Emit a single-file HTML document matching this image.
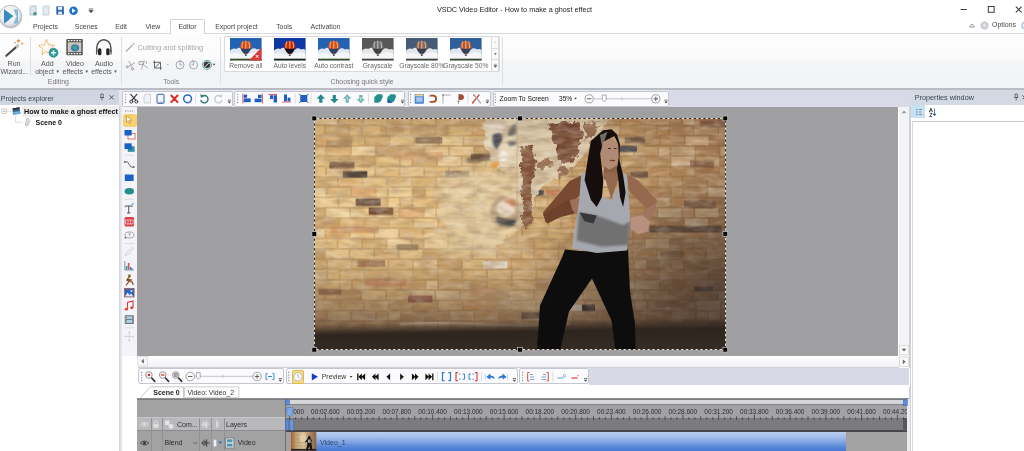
<!DOCTYPE html><html><head><meta charset="utf-8"><title>VSDC Video Editor</title><style>
html,body{margin:0;padding:0;background:#fff;}
body{width:1024px;height:451px;overflow:hidden;position:relative;filter:blur(0.35px);will-change:transform;font-family:"Liberation Sans",sans-serif;}
div{position:absolute;box-sizing:border-box;}
svg{position:absolute;overflow:visible;}
.t{white-space:nowrap;}
</style></head><body><div class="t" style="left:437px;top:6.47px;font-size:7.22px;line-height:8.66px;color:#222;font-weight:normal;">VSDC Video Editor - How to make a ghost effect</div><svg style="left:955px;top:3.400px" width="69" height="14" viewBox="0 0 69 14"><path d="M5.600 6.500h6.200" stroke="#3a3a3a" stroke-width="1" fill="none"/><rect x="33.300" y="3.500" width="5.800" height="5.800" stroke="#3a3a3a" stroke-width="1" fill="none"/><path d="M60.800 3.600l5.800 5.800M66.600 3.600l-5.800 5.800" stroke="#3a3a3a" stroke-width="1.100" fill="none"/></svg><svg style="left:966px;top:19px" width="58" height="13" viewBox="0 0 58 13"><path d="M3.5 8l2.5-3 2.5 3z" stroke="#777" stroke-width="0.7" fill="none"/><circle cx="18.5" cy="6.5" r="3.600" fill="#cfd3da" stroke="#b4b8c0" stroke-width="1.200" stroke-dasharray="1.300 0.900"/><circle cx="18.5" cy="6.5" r="1.3" fill="#e8e8ea"/><circle cx="59.300" cy="6.500" r="3.500" fill="#e8f0fa" stroke="#8ab0e0" stroke-width="1"/></svg><div class="t" style="left:992px;top:21.43px;font-size:6.95px;line-height:8.34px;color:#444;font-weight:normal;">Options</div><svg style="left:0;top:3px" width="24" height="27" viewBox="0 0 24 27">
<defs><radialGradient id="orb" cx="0.45" cy="0.4" r="0.6"><stop offset="0" stop-color="#fff"/><stop offset="0.7" stop-color="#e9ecef"/><stop offset="1" stop-color="#b9bec4"/></radialGradient></defs>
<circle cx="10.5" cy="13.5" r="11.3" fill="url(#orb)" stroke="#aeb3b9" stroke-width="0.8"/>
<path d="M4 6.5l9.5 6.5L4 20.5z" fill="#2aa09a"/><path d="M4 6.5l5 3.4v7.2l-5 3.4z" fill="#3b86c8"/>
<path d="M13.5 6.5h4.5v14h-4.5l3-7z" fill="#6fb3d8" opacity="0.85"/>
</svg><svg style="left:28px;top:5px" width="70" height="13" viewBox="0 0 70 13">
<path d="M2 2.5q0-1.5 1.5-1.5h4.5v9h-6z" fill="#dfe7ee" stroke="#9fb0bd" stroke-width="0.7"/><circle cx="7" cy="8.8" r="1.8" fill="#3b9a8a"/>
<path d="M15 2.5q0-1.5 1.500-1.5h4.500v9h-6z" fill="#e4ebf1" stroke="#b5c2cc" stroke-width="0.7"/>
<rect x="28.300" y="1.300" width="7.600" height="8.400" rx="0.800" fill="#2c69b0"/><rect x="30" y="1.800" width="4.200" height="3" fill="#e9f0f8"/><rect x="30.200" y="6.600" width="3.800" height="3" fill="#dfe8f2"/>
<circle cx="45.500" cy="5.700" r="4.300" fill="#1f73c4"/><path d="M44 3.300l3.700 2.400-3.700 2.400z" fill="#fff"/>
<path d="M60.800 3.800h4.400M60.800 5.200h4.400l-2.200 2.600z" fill="#444" stroke="#444" stroke-width="0.600"/>
</svg><div style="left:0px;top:32.6px;width:1024px;height:1px;background:#d5d8dc;"></div><div style="left:170px;top:19px;width:35px;height:15px;background:#fff;border:1px solid #cfd3d8;border-bottom:none;border-radius:2px 2px 0 0;"></div><div class="t" style="left:5.4px;width:80px;text-align:center;top:22.600px;font-size:6.900px;line-height:8.300px;color:#444;">Projects</div><div class="t" style="left:46.3px;width:80px;text-align:center;top:22.600px;font-size:6.900px;line-height:8.300px;color:#444;">Scenes</div><div class="t" style="left:81.1px;width:80px;text-align:center;top:22.600px;font-size:6.900px;line-height:8.300px;color:#444;">Edit</div><div class="t" style="left:112.8px;width:80px;text-align:center;top:22.600px;font-size:6.900px;line-height:8.300px;color:#444;">View</div><div class="t" style="left:147.5px;width:80px;text-align:center;top:22.600px;font-size:6.900px;line-height:8.300px;color:#444;">Editor</div><div class="t" style="left:196.5px;width:80px;text-align:center;top:22.600px;font-size:6.900px;line-height:8.300px;color:#444;">Export project</div><div class="t" style="left:244.2px;width:80px;text-align:center;top:22.600px;font-size:6.900px;line-height:8.300px;color:#444;">Tools</div><div class="t" style="left:285.5px;width:80px;text-align:center;top:22.600px;font-size:6.900px;line-height:8.300px;color:#444;">Activation</div><div style="left:0px;top:34px;width:1024px;height:54px;background:linear-gradient(#fdfdfe 0%,#fbfbfc 45%,#f4f5f7 52%,#f2f3f6 100%);"></div><div style="left:0px;top:87.5px;width:1024px;height:2.2px;background:#b9bcc2;"></div><div style="left:30.4px;top:37px;width:1px;height:38px;background:#dddfe3;"></div><div style="left:120.6px;top:37px;width:1px;height:48px;background:#dddfe3;"></div><div style="left:220.3px;top:37px;width:1px;height:48px;background:#dddfe3;"></div><div style="left:502.3px;top:37px;width:1px;height:48px;background:#dddfe3;"></div><div class="t" style="left:47.8px;top:78.26px;font-size:6.9px;line-height:8.28px;color:#777;font-weight:normal;">Editing</div><div class="t" style="left:163.2px;top:78.26px;font-size:6.9px;line-height:8.28px;color:#777;font-weight:normal;">Tools</div><div class="t" style="left:330.5px;top:78.26px;font-size:6.9px;line-height:8.28px;color:#777;font-weight:normal;">Choosing quick style</div><div class="t" style="left:-26px;width:80px;text-align:center;top:59.80px;font-size:7.0px;line-height:8.40px;color:#555;">Run</div><div class="t" style="left:-25.8px;width:80px;text-align:center;top:68.10px;font-size:7.0px;line-height:8.40px;color:#555;">Wizard...</div><div class="t" style="left:7.299999999999997px;width:80px;text-align:center;top:59.74px;font-size:7.1px;line-height:8.52px;color:#555;">Add</div><div class="t" style="left:35.2px;top:68.10px;font-size:7.0px;line-height:8.40px;color:#555;">object<span style="font-size:4.500px;position:relative;top:-0.800px;margin-left:1.500px;color:#555">&#9660;</span></div><div class="t" style="left:35px;width:80px;text-align:center;top:59.74px;font-size:7.1px;line-height:8.52px;color:#555;">Video</div><div class="t" style="left:62.5px;top:68.10px;font-size:7.0px;line-height:8.40px;color:#555;">effects<span style="font-size:4.500px;position:relative;top:-0.800px;margin-left:1.500px;color:#555">&#9660;</span></div><div class="t" style="left:64px;width:80px;text-align:center;top:59.74px;font-size:7.1px;line-height:8.52px;color:#555;">Audio</div><div class="t" style="left:91.2px;top:68.10px;font-size:7.0px;line-height:8.40px;color:#555;">effects<span style="font-size:4.500px;position:relative;top:-0.800px;margin-left:1.500px;color:#555">&#9660;</span></div><svg style="left:0;top:34px" width="224" height="44" viewBox="0 34 224 44"><path d="M6.300 55.800L17.800 45.600" stroke="#4a4a4a" stroke-width="2.200" stroke-linecap="round"/><path d="M16 47.200l2.300-2" stroke="#c9c9c9" stroke-width="2.200"/><path d="M18.500 38.500l.6 1.500 1.500.2-1.100 1 .3 1.500-1.300-.8-1.300.8.300-1.500-1.100-1 1.500-.2zM22.300 42l.4 1 1 .1-.8.700.2 1-.9-.5-.9.500.2-1-.8-.7 1-.1zM15 41.500l.3.800.8.100-.6.500.2.800-.7-.4-.7.400.2-.8-.6-.5.800-.1z" fill="#e89040"/><path d="M46.500 39.800l2.300 5 5.400.6-4 3.700 1.100 5.400-4.800-2.700-4.800 2.700 1.100-5.400-4-3.700 5.400-.6z" fill="#fff8ee" stroke="#e8a050" stroke-width="1.100" stroke-dasharray="1.200 0.900" stroke-linejoin="round"/><circle cx="53.500" cy="52.800" r="4.500" fill="#2a9a94" stroke="#1f7f86" stroke-width="0.600"/><path d="M53.500 50.200v5.200M50.900 52.800h5.200" stroke="#dff3f3" stroke-width="1.500"/><rect x="66.300" y="39" width="16.500" height="16.300" rx="1" fill="#555"/><rect x="67.800" y="42.300" width="13.500" height="9.800" fill="#cfc7b5"/><ellipse cx="75" cy="47.800" rx="4.200" ry="3.600" fill="#3a7fc0"/><path d="M72.500 47q1.500-2 3.500-1l1 2.500-2 1.500z" fill="#4aa860"/><path d="M68 40.700h1.600M70.800 40.700h1.600M73.600 40.700h1.600M76.400 40.700h1.600M79.200 40.700h1.600M68 53.700h1.600M70.800 53.700h1.600M73.600 53.700h1.600M76.400 53.700h1.600M79.200 53.700h1.600" stroke="#fff" stroke-width="1.300"/><path d="M96.800 52v-4.500a7 7.800 0 0 1 14 0v4.500" fill="none" stroke="#4a4a4a" stroke-width="1.400"/><rect x="98" y="48.200" width="3.400" height="7" rx="1.500" fill="#222"/><rect x="106.200" y="48.200" width="3.400" height="7" rx="1.500" fill="#222"/><path d="M96.600 50v4M111 50v4" stroke="#555" stroke-width="1.300" stroke-linecap="round"/><path d="M126.300 51.300l6-6" stroke="#b9a9a0" stroke-width="1.300" stroke-linecap="round"/><path d="M131.500 46l2.800-2.800M133 43l1.500 1.500" stroke="#c5c5c5" stroke-width="1" stroke-linecap="round"/><g stroke="#a4a4a8" fill="none" stroke-width="0.900" stroke-linecap="round"><path d="M127 67.500l7.500-4.500M129 61.500l3.800 7" /><circle cx="127.200" cy="66.800" r="1.100"/><circle cx="132.500" cy="69" r="1.100"/><path d="M139.500 61.500h4v3h-4zM144.500 61l-3 8M142 63.500l5.500 4.500" /><path d="M146.500 61.500v2" /></g><g stroke="#6a6a6e" fill="none" stroke-width="1"><path d="M154.500 60.500v7.500h7.500M153 62.300h7.500v7.500M154.800 67.800l5.500-5.400"/></g><path d="M166.700 64l1.100 1.300 1.100-1.300z" fill="#aaa"/><g stroke="#9aa0aa" fill="none" stroke-width="0.900"><circle cx="180" cy="65" r="4"/><path d="M180 62.300v2.700h2.200"/><path d="M180 61l1.300-1M180 61l1.300 1"/><circle cx="193.600" cy="65" r="4"/><path d="M193.600 62.300v2.700h-2.200"/><path d="M193.600 61l-1.300-1M193.600 61l-1.300 1"/></g><circle cx="207" cy="64.800" r="4.500" fill="#e8f4f3" stroke="#3a9a94" stroke-width="0.800"/><circle cx="207" cy="64.800" r="3.300" fill="#3a3a3a"/><path d="M205.200 66.600l3-3M208.500 63l.8.800" stroke="#e8e8e8" stroke-width="1" stroke-linecap="round"/><path d="M212.600 63.800l1.400 1.600 1.400-1.600z" fill="#444"/></svg><div class="t" style="left:137.4px;top:43.10px;font-size:7.5px;line-height:9.00px;color:#a8a8ac;">Cutting and splitting</div><div style="left:223.500px;top:36px;width:276px;height:36px;background:#fff;border:1px solid #d9dade;border-radius:1px;"></div><div style="left:491.300px;top:36px;width:8.200px;height:36px;border:1px solid #d9dade;background:#fafafb;"></div><div style="left:491.300px;top:48px;width:8.200px;height:12px;border-top:1px solid #d9dade;border-bottom:1px solid #d9dade;"></div><svg style="left:491px;top:36px" width="9" height="36" viewBox="0 0 9 36"><path d="M3.200 7l1.200-1.500 1.200 1.500z" fill="#c8c8c8"/><path d="M3 17.300l1.400 1.800 1.400-1.800z" fill="#555"/><path d="M3 28.300h2.800M3 29.600l1.400 1.800 1.400-1.800z" fill="#555" stroke="#555" stroke-width="0.500"/></svg><svg style="left:230px;top:38.1px" width="31.6" height="22.4" viewBox="0 0 31.600 22.400"><rect width="31.600" height="22.400" fill="#2462b4"/><path d="M0 12.500q3-3 6.500-1.500 3-2.500 6 .5 2 1.500 3.500 3.500 2-3 5-3.500 3-2.500 6 0 2.500-1 4.600.5v10.400h-31.600z" fill="#dfe7f2"/><path d="M0 16.500q5-2.500 10-.5t11-.5 10.600.5v5h-31.600z" fill="#f6f8fb" opacity="0.9"/><rect y="20.700" width="31.600" height="1.700" fill="#3a4a22"/><g transform="translate(15.800 10) scale(0.880) translate(-15.800 -10)"><path d="M9.500 8a6.300 6.300 0 0 1 12.600 0q0 4.200-4.500 8.600h-3.600q-4.500-4.400-4.500-8.600z" fill="#d84a30"/><path d="M12.500 2.500q-1.500 3-1 8M15.800 1.700v9M19 2.500q1.500 3 1 8" stroke="#f0c040" stroke-width="1.300" fill="none" opacity="0.9"/><path d="M9.800 10.200q6 1.600 12 0-1.200 3.400-4.200 6.400h-3.600q-3-3-4.200-6.400z" fill="#2a4468"/><rect x="14.800" y="17.300" width="2" height="1.700" fill="#4a3420"/></g><path d="M31.600 9.500v12.900h-12.600z" fill="#d83a3a"/><path d="M25.800 17l2.800 2.800M28.600 17l-2.800 2.800" stroke="#fff" stroke-width="1"/></svg><div class="t" style="left:205.8px;width:80px;text-align:center;top:61.91px;font-size:6.65px;line-height:7.98px;color:#666;">Remove all</div><svg style="left:274px;top:38.1px" width="31.6" height="22.4" viewBox="0 0 31.600 22.400"><rect width="31.600" height="22.400" fill="#1038a4"/><path d="M0 12.500q3-3 6.500-1.500 3-2.500 6 .5 2 1.500 3.500 3.500 2-3 5-3.500 3-2.500 6 0 2.500-1 4.600.5v10.400h-31.600z" fill="#dfe7f2"/><path d="M0 16.500q5-2.500 10-.5t11-.5 10.600.5v5h-31.600z" fill="#f6f8fb" opacity="0.9"/><rect y="20.700" width="31.600" height="1.700" fill="#15200c"/><g transform="translate(15.800 10) scale(0.880) translate(-15.800 -10)"><path d="M9.500 8a6.300 6.300 0 0 1 12.600 0q0 4.200-4.500 8.600h-3.600q-4.500-4.400-4.500-8.600z" fill="#d02418"/><path d="M12.500 2.500q-1.500 3-1 8M15.800 1.700v9M19 2.500q1.500 3 1 8" stroke="#f0c040" stroke-width="1.300" fill="none" opacity="0.9"/><path d="M9.800 10.200q6 1.600 12 0-1.200 3.400-4.200 6.400h-3.600q-3-3-4.200-6.400z" fill="#0c1420"/><rect x="14.800" y="17.300" width="2" height="1.700" fill="#4a3420"/></g></svg><div class="t" style="left:249.8px;width:80px;text-align:center;top:61.91px;font-size:6.65px;line-height:7.98px;color:#666;">Auto levels</div><svg style="left:318px;top:38.1px" width="31.6" height="22.4" viewBox="0 0 31.600 22.400"><rect width="31.600" height="22.400" fill="#2462b4"/><path d="M0 12.500q3-3 6.500-1.500 3-2.500 6 .5 2 1.500 3.500 3.500 2-3 5-3.500 3-2.500 6 0 2.500-1 4.600.5v10.400h-31.600z" fill="#dfe7f2"/><path d="M0 16.500q5-2.500 10-.5t11-.5 10.600.5v5h-31.600z" fill="#f6f8fb" opacity="0.9"/><rect y="20.700" width="31.600" height="1.700" fill="#3a4a22"/><g transform="translate(15.800 10) scale(0.880) translate(-15.800 -10)"><path d="M9.500 8a6.300 6.300 0 0 1 12.600 0q0 4.200-4.500 8.600h-3.600q-4.500-4.400-4.500-8.600z" fill="#d84a30"/><path d="M12.500 2.500q-1.500 3-1 8M15.800 1.700v9M19 2.500q1.500 3 1 8" stroke="#f0c040" stroke-width="1.300" fill="none" opacity="0.9"/><path d="M9.800 10.200q6 1.600 12 0-1.200 3.400-4.200 6.400h-3.600q-3-3-4.200-6.400z" fill="#2a4468"/><rect x="14.800" y="17.300" width="2" height="1.700" fill="#4a3420"/></g></svg><div class="t" style="left:293.8px;width:80px;text-align:center;top:61.91px;font-size:6.65px;line-height:7.98px;color:#666;">Auto contrast</div><svg style="left:362px;top:38.1px" width="31.6" height="22.4" viewBox="0 0 31.600 22.400"><rect width="31.600" height="22.400" fill="#585858"/><path d="M0 12.500q3-3 6.500-1.500 3-2.500 6 .5 2 1.500 3.500 3.500 2-3 5-3.500 3-2.500 6 0 2.500-1 4.600.5v10.400h-31.600z" fill="#e5e5e5"/><path d="M0 16.500q5-2.500 10-.5t11-.5 10.600.5v5h-31.600z" fill="#f7f7f7" opacity="0.9"/><rect y="20.700" width="31.600" height="1.700" fill="#404040"/><g transform="translate(15.800 10) scale(0.880) translate(-15.800 -10)"><path d="M9.500 8a6.300 6.300 0 0 1 12.600 0q0 4.200-4.500 8.600h-3.600q-4.500-4.400-4.500-8.600z" fill="#717171"/><path d="M12.500 2.500q-1.500 3-1 8M15.800 1.700v9M19 2.500q1.500 3 1 8" stroke="#c0c0c0" stroke-width="1.300" fill="none" opacity="0.9"/><path d="M9.800 10.200q6 1.600 12 0-1.200 3.400-4.200 6.400h-3.600q-3-3-4.200-6.400z" fill="#404040"/><rect x="14.800" y="17.300" width="2" height="1.700" fill="#383838"/></g></svg><div class="t" style="left:337.8px;width:80px;text-align:center;top:61.91px;font-size:6.65px;line-height:7.98px;color:#666;">Grayscale</div><svg style="left:406px;top:38.1px" width="31.6" height="22.4" viewBox="0 0 31.600 22.400"><rect width="31.600" height="22.400" fill="#455b78"/><path d="M0 12.500q3-3 6.500-1.500 3-2.500 6 .5 2 1.500 3.500 3.500 2-3 5-3.500 3-2.500 6 0 2.500-1 4.600.5v10.400h-31.600z" fill="#e2e5e9"/><path d="M0 16.500q5-2.500 10-.5t11-.5 10.600.5v5h-31.600z" fill="#f6f7f8" opacity="0.9"/><rect y="20.700" width="31.600" height="1.700" fill="#3d4335"/><g transform="translate(15.800 10) scale(0.880) translate(-15.800 -10)"><path d="M9.500 8a6.300 6.300 0 0 1 12.600 0q0 4.200-4.500 8.600h-3.600q-4.500-4.400-4.500-8.600z" fill="#95635a"/><path d="M12.500 2.500q-1.500 3-1 8M15.800 1.700v9M19 2.500q1.500 3 1 8" stroke="#d0c093" stroke-width="1.300" fill="none" opacity="0.9"/><path d="M9.800 10.200q6 1.600 12 0-1.200 3.400-4.200 6.400h-3.600q-3-3-4.200-6.400z" fill="#38414e"/><rect x="14.800" y="17.300" width="2" height="1.700" fill="#3e362f"/></g></svg><div class="t" style="left:381.8px;width:80px;text-align:center;top:61.91px;font-size:6.65px;line-height:7.98px;color:#666;">Grayscale 80%</div><svg style="left:450px;top:38.1px" width="31.6" height="22.4" viewBox="0 0 31.600 22.400"><rect width="31.600" height="22.400" fill="#315f9d"/><path d="M0 12.500q3-3 6.500-1.500 3-2.500 6 .5 2 1.500 3.500 3.500 2-3 5-3.500 3-2.500 6 0 2.500-1 4.600.5v10.400h-31.600z" fill="#e0e6ee"/><path d="M0 16.500q5-2.500 10-.5t11-.5 10.600.5v5h-31.600z" fill="#f6f7fa" opacity="0.9"/><rect y="20.700" width="31.600" height="1.700" fill="#3b4729"/><g transform="translate(15.800 10) scale(0.880) translate(-15.800 -10)"><path d="M9.500 8a6.300 6.300 0 0 1 12.600 0q0 4.200-4.500 8.600h-3.600q-4.500-4.400-4.500-8.600z" fill="#be5340"/><path d="M12.500 2.500q-1.500 3-1 8M15.800 1.700v9M19 2.500q1.500 3 1 8" stroke="#e4c060" stroke-width="1.300" fill="none" opacity="0.9"/><path d="M9.800 10.200q6 1.600 12 0-1.200 3.400-4.200 6.400h-3.600q-3-3-4.200-6.400z" fill="#2f435e"/><rect x="14.800" y="17.300" width="2" height="1.700" fill="#453526"/></g></svg><div class="t" style="left:425.8px;width:80px;text-align:center;top:61.91px;font-size:6.65px;line-height:7.98px;color:#666;">Grayscale 50%</div><div style="left:0px;top:89.7px;width:1024px;height:17.5px;background:#e6e7ef;"></div><div style="left:669px;top:89.9px;width:242px;height:16.9px;background:#dad9e8;"></div><div style="left:0px;top:90.3px;width:118.5px;height:14.8px;background:#cfd6e1;"></div><div class="t" style="left:0.8px;top:94.87px;font-size:7.05px;line-height:8.46px;color:#3c4450;font-weight:normal;">Projects explorer</div><svg style="left:99px;top:93px" width="18" height="9" viewBox="0 0 18 9"><path d="M1.800 1h2.400v3.500h-2.400zM1 4.500h4M3 4.500v3" stroke="#555" stroke-width="0.800" fill="none"/><path d="M10.500 2.300l4 4M14.500 2.300l-4 4" stroke="#444" stroke-width="0.900"/></svg><div style="left:0px;top:105.2px;width:119.5px;height:346px;background:#fff;"></div><div style="left:22px;top:106px;width:96.5px;height:10.5px;background:#efefef;"></div><svg style="left:0;top:105px" width="40" height="24" viewBox="0 0 40 24">
<path d="M6.500 6.300h5M15.500 11v6.200h7" stroke="#c5c5c5" stroke-width="0.600" fill="none"/>
<rect x="2" y="4" width="4.600" height="4.600" fill="#fff" stroke="#aaa" stroke-width="0.600"/><path d="M3.200 6.300h2.200" stroke="#666" stroke-width="0.600"/>
<path d="M12.500 3.500l7-1.200 1 6.500-7.500 1z" fill="#3a5f80"/><path d="M13 7l7-1 .4 2.800-7 0.900z" fill="#6fb0d8"/><path d="M12.500 3.500l7-1.200 .2 1.300-7 1.200z" fill="#222"/>
<path d="M25 20.500l2-7.500 1.500 0.500-1 7.500zM28 20.500l2.500-6" stroke="#b5b8bc" stroke-width="0.800" fill="#e3e5e8"/>
</svg><div class="t" style="left:24px;top:107.65px;font-size:7.25px;line-height:8.70px;color:#111;font-weight:bold;width:94.3px;overflow:hidden;">How to make a ghost effect</div><div class="t" style="left:35.5px;top:118.80px;font-size:7.0px;line-height:8.40px;color:#111;font-weight:bold;">Scene 0</div><div style="left:119.3px;top:105.2px;width:2.9px;height:346px;background:linear-gradient(90deg,#c9ccd3,#dddfe5 40%,#e8e9ee);"></div><div style="left:122px;top:107px;width:15px;height:344px;background:#fff;"></div><div style="left:122px;top:107px;width:15px;height:249px;background:#f3f3f8;"></div><div style="left:122.5px;top:113.5px;width:14px;height:13px;background:#f5d170;border-radius:2px;"></div><svg style="left:120px;top:107px" width="18" height="240" viewBox="120 107 18 240"><rect x="125.0" y="110.500" width="1.100" height="1.100" fill="#8a8a92"/><rect x="127.4" y="110.500" width="1.100" height="1.100" fill="#8a8a92"/><rect x="129.8" y="110.500" width="1.100" height="1.100" fill="#8a8a92"/><rect x="132.2" y="110.500" width="1.100" height="1.100" fill="#8a8a92"/><path d="M126.500 116v6.200l1.800-1.500 1.300 3 1.200-.5-1.300-2.900 2.300-.2z" fill="#fffdf4" stroke="#c08a30" stroke-width="0.700"/><path d="M126 115.500h1M128 115.500h1M130 115.500h1M126 117.500v1" stroke="#c8a050" stroke-width="0.600"/><rect x="128" y="133.500" width="7" height="5.500" fill="#fff" stroke="#d85048" stroke-width="0.800"/><rect x="124.500" y="130" width="7.200" height="5.500" fill="#1a5fc4"/><rect x="127.800" y="146.300" width="6.800" height="5.500" fill="#2a90a0"/><rect x="124.500" y="143.300" width="7.200" height="5.800" fill="#1a5fc4"/><path d="M125 155.2h9" stroke="#d4d5dc" stroke-width="0.800"/><path d="M124.800 162q3-1.500 4.500 2.500t4.500 2.500" fill="none" stroke="#555" stroke-width="0.900"/><rect x="124" y="161.200" width="1.500" height="1.500" fill="#555"/><rect x="133" y="166.300" width="1.500" height="1.500" fill="#555"/><rect x="124.800" y="174.500" width="8.800" height="6.500" fill="#1a62c8"/><ellipse cx="129.300" cy="191.200" rx="4.700" ry="3.200" fill="#24908e"/><path d="M125 199.4h9" stroke="#d4d5dc" stroke-width="0.800"/><path d="M125.200 206h7M128.700 206v7M127 213h3.400" stroke="#555" stroke-width="1" fill="none"/><path d="M125.200 206v1.200M132.200 206v1.200" stroke="#555" stroke-width="0.700"/><path d="M131 205.500l2-1.800" stroke="#3a8ad0" stroke-width="0.800"/><path d="M133.800 203l-1.800.3 1.300 1.300z" fill="#3a8ad0"/><rect x="124.500" y="217" width="9.600" height="9.600" rx="1.500" fill="#d8404a"/><path d="M125.500 220h7.600v4h-7.600zM128 220v4M130.500 220v4" stroke="#fbe0e0" stroke-width="0.700" fill="none"/><ellipse cx="129.500" cy="235" rx="4.600" ry="3" fill="#fafafa" stroke="#8a8a8e" stroke-width="0.800"/><path d="M128.300 233.800h2.400M129.500 233.800v2.500" stroke="#777" stroke-width="0.600"/><path d="M125.200 236.800l-0.700 2 2.200-0.800z" fill="#555"/><path d="M125 243.5h9" stroke="#d4d5dc" stroke-width="0.800"/><path d="M125 255.500l2-3.500 5.500-4.500 1 1-4.500 5.500z" fill="#f2f2f5" stroke="#c5c5cc" stroke-width="0.700"/><path d="M124.800 261v9h9" stroke="#4a6a9a" stroke-width="0.700" fill="none"/><rect x="125.800" y="266" width="1.500" height="3.600" fill="#2a9090"/><rect x="127.800" y="263" width="1.700" height="6.600" fill="#d85050"/><path d="M130 269.600v-3l3.500 3z" fill="#2a80c8"/><circle cx="129.400" cy="275.800" r="1.500" fill="#9a6a3a"/><path d="M129.300 277.300q-2 1-2.300 3l2.300 1-3 3.500M129.500 281l2.800 1.200.8 2.300M127 279.500l4.500.5" stroke="#8a5a2a" stroke-width="1.300" fill="none" stroke-linecap="round"/><rect x="124.500" y="288.500" width="9.600" height="8.500" fill="#2a68c0" stroke="#b0483a" stroke-width="0.700"/><path d="M125 296.500l2.500-4 2 2.500 1.500-1.500 2.500 3z" fill="#dfe8f4"/><circle cx="131.500" cy="291" r="1" fill="#f0f0f8"/><path d="M127.500 309v-6.500l5.500-1.500v6.500" fill="none" stroke="#e03a3a" stroke-width="1.100"/><ellipse cx="126.300" cy="309.300" rx="1.600" ry="1.200" fill="#e03a3a"/><ellipse cx="131.800" cy="307.800" rx="1.600" ry="1.200" fill="#e03a3a"/><rect x="124.800" y="315.300" width="9" height="8.600" fill="#666"/><rect x="126.400" y="316.300" width="5.800" height="2.900" fill="#a8d0e8"/><rect x="126.400" y="320" width="5.800" height="2.900" fill="#a8d0e8"/><path d="M125.600 316v7.500M133 316v7.500" stroke="#ddd" stroke-width="0.700" stroke-dasharray="0.800 0.800"/><path d="M125 327.8h9" stroke="#d4d5dc" stroke-width="0.800"/><path d="M129.300 331.800v9.400M124.600 336.500h9.400" stroke="#ccd0d8" stroke-width="0.800"/><path d="M129.300 331.300l1.300 1.600h-2.600zM129.300 341.700l1.300-1.600h-2.600zM124.100 336.500l1.600-1.300v2.600zM134.500 336.500l-1.600-1.300v2.600z" fill="#ccd0d8"/></svg><div style="left:122.3px;top:90.6px;width:110.7px;height:16px;background:#fbfbfd;border:1px solid #c4c6d0;border-radius:2px;"></div><div style="left:234.3px;top:90.6px;width:171.09999999999997px;height:16px;background:#fbfbfd;border:1px solid #c4c6d0;border-radius:2px;"></div><div style="left:407.5px;top:90.6px;width:83.30000000000001px;height:16px;background:#fbfbfd;border:1px solid #c4c6d0;border-radius:2px;"></div><div style="left:492.5px;top:90.6px;width:176.70000000000005px;height:16px;background:#fbfbfd;border:1px solid #c4c6d0;border-radius:2px;"></div><svg style="left:118px;top:89px" width="560" height="19" viewBox="118 89 560 19"><rect x="125.1" y="93.8" width="1.100" height="1.100" fill="#8a8a92"/><rect x="125.1" y="96.5" width="1.100" height="1.100" fill="#8a8a92"/><rect x="125.1" y="99.2" width="1.100" height="1.100" fill="#8a8a92"/><rect x="125.1" y="101.9" width="1.100" height="1.100" fill="#8a8a92"/><g stroke="#3a3a3a" fill="none" stroke-width="1.200" stroke-linecap="round"><path d="M130.800 94.300l5 6M136.800 94.300l-5 6"/><circle cx="131.300" cy="101.600" r="1.500" stroke-width="1"/><circle cx="136.300" cy="101.600" r="1.500" stroke-width="1"/></g><path d="M144 103v-6.500q0-2.500 2.500-2.500h4v9z" fill="#eef1f5" stroke="#c3cad3" stroke-width="0.800"/><rect x="157" y="94.300" width="7" height="9" rx="0.800" fill="#f2f6fb" stroke="#2f6098" stroke-width="1"/><path d="M158.500 102.300h3.500l1-1" stroke="#5f87b5" stroke-width="0.700" fill="none"/><path d="M171.300 95.500l6.200 6.600M177.500 95.500l-6.200 6.600" stroke="#d92a2a" stroke-width="2" stroke-linecap="round"/><circle cx="187.600" cy="98.800" r="3.900" fill="none" stroke="#2468c4" stroke-width="1.500"/><path d="M195.6 93.500v10" stroke="#d4d5dc" stroke-width="0.800"/><path d="M202 96.300a3.700 3.700 0 1 1 -1.300 3.700" fill="none" stroke="#2a7c70" stroke-width="1.400"/><path d="M200.300 94l.6 3.800 3.400-1.400z" fill="#2a7c70"/><path d="M220.700 96.300a3.700 3.700 0 1 0 1.300 3.700" fill="none" stroke="#c9ccd2" stroke-width="1.400"/><path d="M222.400 94l-.6 3.800-3.400-1.400z" fill="#c9ccd2"/><path d="M227.70000000000002 100.2h3.200" stroke="#444" stroke-width="0.700"/><path d="M227.60000000000002 101.5h3.400l-1.700 2z" fill="#444"/><rect x="237.1" y="93.8" width="1.100" height="1.100" fill="#8a8a92"/><rect x="237.1" y="96.5" width="1.100" height="1.100" fill="#8a8a92"/><rect x="237.1" y="99.2" width="1.100" height="1.100" fill="#8a8a92"/><rect x="237.1" y="101.9" width="1.100" height="1.100" fill="#8a8a92"/><path d="M242.900 93.500v10" stroke="#d84a4a" stroke-width="0.900"/><rect x="243.700" y="94.600" width="3.400" height="3.200" fill="#1f5fc4"/><rect x="243.700" y="98.400" width="7" height="3.800" fill="#1f5fc4"/><path d="M262.400 93.500v10" stroke="#d84a4a" stroke-width="0.900"/><rect x="258" y="94.800" width="3.600" height="3.200" fill="#1f5fc4"/><rect x="254.600" y="98.600" width="7" height="3.600" fill="#1f5fc4"/><path d="M268.300 94.400h9" stroke="#d84a4a" stroke-width="0.900"/><rect x="270" y="95.200" width="3" height="3.800" fill="#1f5fc4"/><rect x="273.600" y="95.200" width="3.400" height="7.300" fill="#1f5fc4"/><path d="M282 102h9" stroke="#d84a4a" stroke-width="0.900"/><rect x="284" y="94.500" width="3" height="6.800" fill="#1f5fc4"/><rect x="287.600" y="97.600" width="2.800" height="3.700" fill="#1f5fc4"/><path d="M295.2 93.500v10" stroke="#d4d5dc" stroke-width="0.800"/><rect x="300.300" y="95" width="7" height="7" fill="#1f5fc4"/><path d="M299 93.800l2 2M308.600 93.800l-2 2M299 103.200l2-2M308.600 103.200l-2-2" stroke="#2a4a8a" stroke-width="0.900"/><path d="M311 93.500v10" stroke="#d4d5dc" stroke-width="0.800"/><path d="M320.8 94.300l4.200 4.400h-2.600v4h-3.200v-4h-2.600z" fill="#24888c" opacity="1"/><path d="M334.3 103.300l4.200-4.400h-2.600v-4h-3.200v4h-2.600z" fill="#24888c" opacity="1"/><path d="M347.2 94.300l4.200 4.400h-2.600v4h-3.200v-4h-2.600z" fill="#4aa0a0" opacity="0.8"/><path d="M360.8 103.300l4.200-4.400h-2.600v-4h-3.200v4h-2.600z" fill="#4aa0a0" opacity="0.8"/><path d="M347.200 96.500v4M360.800 97v4" stroke="#d8f0f0" stroke-width="0.800"/><path d="M368.6 93.500v10" stroke="#d4d5dc" stroke-width="0.800"/><path d="M374.300 102.800v-5.500l3-3h4.200q1.500 0.500 1.300 2.500l-2 4.500-2.500 1.500z" fill="#24908e"/><path d="M387.500 102.800v-5.500l3-3h4.200q1.500 0.500 1.300 2.500l-2 4.500-2.500 1.500z" fill="#24908e"/><path d="M387.500 102.800v-4.300l5 4.300z" fill="#1a5ac0"/><path d="M400.9 100.2h3.200" stroke="#444" stroke-width="0.700"/><path d="M400.8 101.5h3.400l-1.700 2z" fill="#444"/><rect x="410.0" y="93.8" width="1.100" height="1.100" fill="#8a8a92"/><rect x="410.0" y="96.5" width="1.100" height="1.100" fill="#8a8a92"/><rect x="410.0" y="99.2" width="1.100" height="1.100" fill="#8a8a92"/><rect x="410.0" y="101.9" width="1.100" height="1.100" fill="#8a8a92"/><rect x="415" y="94.300" width="8.600" height="9" fill="#5a94dc" stroke="#3a70b8" stroke-width="0.600"/><rect x="415.300" y="94.500" width="8" height="1.700" fill="#f0d890"/><rect x="416.300" y="97.300" width="6" height="4.300" fill="#a8c8f0"/><path d="M429 95.700h4a3 3 0 0 1 0 6.200h-4" fill="none" stroke="#a84a20" stroke-width="1.800"/><path d="M428.500 95.700h1.800M428.500 101.900h1.800" stroke="#d8d0c8" stroke-width="1.800"/><path d="M443 103.500v-8.500h7.500" fill="none" stroke="#9a9aa0" stroke-width="0.800"/><path d="M442 95h2M443 94v2" stroke="#777" stroke-width="0.600"/><path d="M458.500 93.800v10" stroke="#8a8a90" stroke-width="0.800"/><path d="M459 94.300h2.500q2.500 0.500 2.500 3t-2.500 2.700h-2.500z" fill="#a84a30"/><path d="M456.800 101.500h3.400" stroke="#999" stroke-width="0.700"/><path d="M467.8 93.500v10" stroke="#d4d5dc" stroke-width="0.800"/><path d="M472.500 103l6.500-8" stroke="#d84030" stroke-width="1.300" stroke-linecap="round"/><path d="M480.500 103l-6.500-8" stroke="#b0b0b4" stroke-width="1.300" stroke-linecap="round"/><path d="M473 94.500l2 1.500" stroke="#999" stroke-width="1.500"/><path d="M485.79999999999995 100.2h3.200" stroke="#444" stroke-width="0.700"/><path d="M485.7 101.5h3.400l-1.700 2z" fill="#444"/><rect x="494.9" y="93.8" width="1.100" height="1.100" fill="#8a8a92"/><rect x="494.9" y="96.5" width="1.100" height="1.100" fill="#8a8a92"/><rect x="494.9" y="99.2" width="1.100" height="1.100" fill="#8a8a92"/><rect x="494.9" y="101.9" width="1.100" height="1.100" fill="#8a8a92"/><path d="M574.200 97.800h2.600l-1.300 1.700z" fill="#333"/><circle cx="589.200" cy="98.800" r="4.100" fill="#fafafa" stroke="#8a8a90" stroke-width="0.800"/><path d="M587 98.800h4.400" stroke="#555" stroke-width="0.900"/><path d="M594 98.800h57" stroke="#b5b5bb" stroke-width="0.800"/><path d="M621.800 97.300v3" stroke="#b5b5bb" stroke-width="0.700"/><path d="M602.300 95h3.800v4.800l-1.900 2-1.900-2z" fill="#fdfdfd" stroke="#8a8a90" stroke-width="0.700"/><circle cx="655.800" cy="98.800" r="4.100" fill="#fafafa" stroke="#8a8a90" stroke-width="0.800"/><path d="M653.600 98.800h4.400M655.800 96.600v4.400" stroke="#555" stroke-width="0.900"/><path d="M664.4 100.2h3.200" stroke="#444" stroke-width="0.700"/><path d="M664.3 101.5h3.400l-1.700 2z" fill="#444"/></svg><div class="t" style="left:499.6px;top:94.87px;font-size:6.72px;line-height:8.06px;color:#111;font-weight:normal;">Zoom To Screen</div><div class="t" style="left:559px;top:94.94px;font-size:6.6px;line-height:7.92px;color:#111;font-weight:normal;">35%</div><div style="left:137px;top:107.2px;width:761.2px;height:248.4px;background:#a09fa1;"></div><div style="left:898.5px;top:107px;width:11px;height:260px;background:#f4f4f7;"></div><svg style="left:898px;top:107px" width="12" height="262" viewBox="0 0 12 262"><path d="M3.500 6.200l2.500-2.700 2.500 2.700z" fill="#999"/><rect x="1.500" y="238.500" width="9" height="9" fill="#fafafa" stroke="#ccc" stroke-width="0.600"/><path d="M3.600 241.800l2.400 2.800 2.400-2.800z" fill="#666"/><rect x="1.500" y="250" width="9" height="9.500" fill="#fafafa" stroke="#ccc" stroke-width="0.600"/><path d="M4.800 252.200l2.800 2.500-2.800 2.500z" fill="#666"/></svg><div style="left:137.5px;top:355.7px;width:761px;height:11px;background:linear-gradient(#fff,#f1f1f4);"></div><svg style="left:137px;top:356px" width="12" height="11" viewBox="0 0 12 11"><rect x="0.800" y="0.500" width="9.500" height="9.500" fill="#f6f6f8" stroke="#cfcfd4" stroke-width="0.600"/><path d="M7 2.800l-3 2.500 3 2.500z" fill="#777"/></svg><svg style="left:314px;top:117.5px" width="412" height="232" viewBox="314 117.5 412 232"><defs>
<radialGradient id="wg" cx="0.15" cy="0.38" r="1.1" fx="0.15" fy="0.38"><stop offset="0" stop-color="#eecb8c"/><stop offset="0.3" stop-color="#dcb678"/><stop offset="0.55" stop-color="#bf9662"/><stop offset="0.8" stop-color="#9a704a"/><stop offset="1" stop-color="#6a5240"/></radialGradient>
<linearGradient id="vg" x1="0" x2="0" y1="0" y2="1"><stop offset="0" stop-color="#46322a" stop-opacity="0.1"/><stop offset="0.12" stop-color="#46322a" stop-opacity="0"/><stop offset="0.52" stop-color="#46322a" stop-opacity="0"/><stop offset="0.66" stop-color="#46322a" stop-opacity="0.08"/><stop offset="0.79" stop-color="#46322a" stop-opacity="0.27"/><stop offset="0.88" stop-color="#46322a" stop-opacity="0.46"/></linearGradient>
<linearGradient id="fl" x1="0" x2="0.2" y1="0" y2="1"><stop offset="0.2" stop-color="#30261f" stop-opacity="0"/><stop offset="0.36" stop-color="#30261f" stop-opacity="0.55"/><stop offset="0.49" stop-color="#2f261f" stop-opacity="0.97"/><stop offset="0.54" stop-color="#2e251f"/><stop offset="1" stop-color="#342b25"/></linearGradient>
<filter id="b1" x="-20%" y="-20%" width="140%" height="140%"><feGaussianBlur stdDeviation="1.2"/></filter>
<filter id="b2" x="-20%" y="-20%" width="140%" height="140%"><feGaussianBlur stdDeviation="2.5"/></filter>
<filter id="b05" x="-10%" y="-10%" width="120%" height="120%"><feGaussianBlur stdDeviation="0.5"/></filter>
<filter id="nz" x="0" y="0" width="100%" height="100%"><feTurbulence type="fractalNoise" baseFrequency="0.06 0.16" numOctaves="2" seed="3" result="n"/><feColorMatrix in="n" type="matrix" values="0 0 0 0 0.35  0 0 0 0 0.22  0 0 0 0 0.12  1.6 0 0 0 -0.62"/></filter><filter id="nz2" x="0" y="0" width="100%" height="100%"><feTurbulence type="fractalNoise" baseFrequency="0.07 0.18" numOctaves="2" seed="11" result="n"/><feColorMatrix in="n" type="matrix" values="0 0 0 0 0.96  0 0 0 0 0.9  0 0 0 0 0.78  0 1.6 0 0 -0.66"/></filter><filter id="rg" x="-10%" y="-10%" width="120%" height="120%"><feTurbulence type="fractalNoise" baseFrequency="0.09" numOctaves="3" seed="5" result="t"/><feDisplacementMap in="SourceGraphic" in2="t" scale="14" xChannelSelector="R" yChannelSelector="G"/><feGaussianBlur stdDeviation="0.7"/></filter><filter id="rg2" x="-10%" y="-10%" width="120%" height="120%"><feTurbulence type="fractalNoise" baseFrequency="0.16" numOctaves="3" seed="9" result="t"/><feDisplacementMap in="SourceGraphic" in2="t" scale="9" xChannelSelector="R" yChannelSelector="G"/><feGaussianBlur stdDeviation="0.45"/></filter><radialGradient id="vig" cx="1" cy="0.72" r="0.5"><stop offset="0" stop-color="#322824" stop-opacity="0.62"/><stop offset="1" stop-color="#322824" stop-opacity="0"/></radialGradient><clipPath id="pc"><rect x="314" y="117.5" width="412" height="232"/></clipPath>
</defs><g clip-path="url(#pc)"><rect x="314" y="117.5" width="412" height="232" fill="url(#wg)"/><g filter="url(#b05)"><rect x="289.2" y="115.0" width="23.6" height="9.3" fill="#fff0d0" fill-opacity="0.08" stroke="#6a4a2c" stroke-opacity="0.22" stroke-width="0.9"/><rect x="313.8" y="115.0" width="23.6" height="9.3" fill="#fff0d0" fill-opacity="0.28" stroke="#6a4a2c" stroke-opacity="0.22" stroke-width="0.9"/><rect x="338.4" y="115.0" width="23.6" height="9.3" fill="#c88a58" fill-opacity="0.16" stroke="#6a4a2c" stroke-opacity="0.22" stroke-width="0.9"/><rect x="363.0" y="115.0" width="23.6" height="9.3" fill="#c88a58" fill-opacity="0.07" stroke="#6a4a2c" stroke-opacity="0.22" stroke-width="0.9"/><rect x="387.6" y="115.0" width="23.6" height="9.3" fill="#8a5a38" fill-opacity="0.21" stroke="#6a4a2c" stroke-opacity="0.22" stroke-width="0.9"/><rect x="412.2" y="115.0" width="23.6" height="9.3" fill="#c88a58" fill-opacity="0.00" stroke="#6a4a2c" stroke-opacity="0.22" stroke-width="0.9"/><rect x="436.8" y="115.0" width="23.6" height="9.3" fill="#fff0d0" fill-opacity="0.00" stroke="#6a4a2c" stroke-opacity="0.22" stroke-width="0.9"/><rect x="461.4" y="115.0" width="23.6" height="9.3" fill="#8a5a38" fill-opacity="0.00" stroke="#6a4a2c" stroke-opacity="0.22" stroke-width="0.9"/><rect x="486.0" y="115.0" width="11.3" height="9.3" fill="#fff0d0" fill-opacity="0.20" stroke="#6a4a2c" stroke-opacity="0.22" stroke-width="0.9"/><rect x="498.3" y="115.0" width="23.6" height="9.3" fill="#ffe8c0" fill-opacity="0.00" stroke="#6a4a2c" stroke-opacity="0.22" stroke-width="0.9"/><rect x="522.9" y="115.0" width="23.6" height="9.3" fill="#8a5a38" fill-opacity="0.15" stroke="#6a4a2c" stroke-opacity="0.22" stroke-width="0.9"/><rect x="547.5" y="115.0" width="23.6" height="9.3" fill="#fff0d0" fill-opacity="0.21" stroke="#6a4a2c" stroke-opacity="0.22" stroke-width="0.9"/><rect x="572.1" y="115.0" width="11.3" height="9.3" fill="#c88a58" fill-opacity="0.25" stroke="#6a4a2c" stroke-opacity="0.22" stroke-width="0.9"/><rect x="584.4" y="115.0" width="11.3" height="9.3" fill="#7a5238" fill-opacity="0.15" stroke="#6a4a2c" stroke-opacity="0.22" stroke-width="0.9"/><rect x="596.7" y="115.0" width="23.6" height="9.3" fill="#8a5a38" fill-opacity="0.08" stroke="#6a4a2c" stroke-opacity="0.22" stroke-width="0.9"/><rect x="621.3" y="115.0" width="23.6" height="9.3" fill="#c87a48" fill-opacity="0.24" stroke="#6a4a2c" stroke-opacity="0.22" stroke-width="0.9"/><rect x="645.9" y="115.0" width="23.6" height="9.3" fill="#fff0d0" fill-opacity="0.09" stroke="#6a4a2c" stroke-opacity="0.22" stroke-width="0.9"/><rect x="670.5" y="115.0" width="11.3" height="9.3" fill="#c87a48" fill-opacity="0.10" stroke="#6a4a2c" stroke-opacity="0.22" stroke-width="0.9"/><rect x="682.8" y="115.0" width="11.3" height="9.3" fill="#fff0d0" fill-opacity="0.24" stroke="#6a4a2c" stroke-opacity="0.22" stroke-width="0.9"/><rect x="695.1" y="115.0" width="23.6" height="9.3" fill="#c87a48" fill-opacity="0.14" stroke="#6a4a2c" stroke-opacity="0.22" stroke-width="0.9"/><rect x="719.7" y="115.0" width="23.6" height="9.3" fill="#7a5238" fill-opacity="0.08" stroke="#6a4a2c" stroke-opacity="0.22" stroke-width="0.9"/><rect x="300.6" y="125.3" width="23.6" height="9.3" fill="#fff0d0" fill-opacity="0.07" stroke="#6a4a2c" stroke-opacity="0.22" stroke-width="0.9"/><rect x="325.2" y="125.3" width="23.6" height="9.3" fill="#7a5238" fill-opacity="0.13" stroke="#6a4a2c" stroke-opacity="0.22" stroke-width="0.9"/><rect x="349.8" y="125.3" width="11.3" height="9.3" fill="#c87a48" fill-opacity="0.00" stroke="#6a4a2c" stroke-opacity="0.22" stroke-width="0.9"/><rect x="362.1" y="125.3" width="23.6" height="9.3" fill="#c87a48" fill-opacity="0.00" stroke="#6a4a2c" stroke-opacity="0.22" stroke-width="0.9"/><rect x="386.7" y="125.3" width="23.6" height="9.3" fill="#7a5238" fill-opacity="0.07" stroke="#6a4a2c" stroke-opacity="0.22" stroke-width="0.9"/><rect x="411.3" y="125.3" width="23.6" height="9.3" fill="#8a5a38" fill-opacity="0.16" stroke="#6a4a2c" stroke-opacity="0.22" stroke-width="0.9"/><rect x="435.9" y="125.3" width="11.3" height="9.3" fill="#7a5238" fill-opacity="0.16" stroke="#6a4a2c" stroke-opacity="0.22" stroke-width="0.9"/><rect x="448.2" y="125.3" width="23.6" height="9.3" fill="#c88a58" fill-opacity="0.00" stroke="#6a4a2c" stroke-opacity="0.22" stroke-width="0.9"/><rect x="472.8" y="125.3" width="23.6" height="9.3" fill="#c88a58" fill-opacity="0.30" stroke="#6a4a2c" stroke-opacity="0.22" stroke-width="0.9"/><rect x="497.4" y="125.3" width="23.6" height="9.3" fill="#8a5a38" fill-opacity="0.00" stroke="#6a4a2c" stroke-opacity="0.22" stroke-width="0.9"/><rect x="522.0" y="125.3" width="23.6" height="9.3" fill="#ffe8c0" fill-opacity="0.12" stroke="#6a4a2c" stroke-opacity="0.22" stroke-width="0.9"/><rect x="546.6" y="125.3" width="23.6" height="9.3" fill="#ffe8c0" fill-opacity="0.12" stroke="#6a4a2c" stroke-opacity="0.22" stroke-width="0.9"/><rect x="571.2" y="125.3" width="23.6" height="9.3" fill="#fff4dc" fill-opacity="0.15" stroke="#6a4a2c" stroke-opacity="0.22" stroke-width="0.9"/><rect x="595.8" y="125.3" width="23.6" height="9.3" fill="#ffe8c0" fill-opacity="0.23" stroke="#6a4a2c" stroke-opacity="0.22" stroke-width="0.9"/><rect x="620.4" y="125.3" width="23.6" height="9.3" fill="#fff0d0" fill-opacity="0.00" stroke="#6a4a2c" stroke-opacity="0.22" stroke-width="0.9"/><rect x="645.0" y="125.3" width="11.3" height="9.3" fill="#fff4dc" fill-opacity="0.00" stroke="#6a4a2c" stroke-opacity="0.22" stroke-width="0.9"/><rect x="657.3" y="125.3" width="11.3" height="9.3" fill="#c88a58" fill-opacity="0.08" stroke="#6a4a2c" stroke-opacity="0.22" stroke-width="0.9"/><rect x="669.6" y="125.3" width="23.6" height="9.3" fill="#8a5a38" fill-opacity="0.08" stroke="#6a4a2c" stroke-opacity="0.22" stroke-width="0.9"/><rect x="694.2" y="125.3" width="23.6" height="9.3" fill="#fff0d0" fill-opacity="0.14" stroke="#6a4a2c" stroke-opacity="0.22" stroke-width="0.9"/><rect x="718.8" y="125.3" width="23.6" height="9.3" fill="#ffe8c0" fill-opacity="0.19" stroke="#6a4a2c" stroke-opacity="0.22" stroke-width="0.9"/><rect x="291.7" y="135.6" width="23.6" height="9.3" fill="#8a5a38" fill-opacity="0.21" stroke="#6a4a2c" stroke-opacity="0.22" stroke-width="0.9"/><rect x="316.3" y="135.6" width="23.6" height="9.3" fill="#c87a48" fill-opacity="0.20" stroke="#6a4a2c" stroke-opacity="0.22" stroke-width="0.9"/><rect x="340.9" y="135.6" width="11.3" height="9.3" fill="#7a5238" fill-opacity="0.30" stroke="#6a4a2c" stroke-opacity="0.22" stroke-width="0.9"/><rect x="353.2" y="135.6" width="11.3" height="9.3" fill="#8a5a38" fill-opacity="0.08" stroke="#6a4a2c" stroke-opacity="0.22" stroke-width="0.9"/><rect x="365.5" y="135.6" width="23.6" height="9.3" fill="#8a5a38" fill-opacity="0.17" stroke="#6a4a2c" stroke-opacity="0.22" stroke-width="0.9"/><rect x="390.1" y="135.6" width="23.6" height="9.3" fill="#fff0d0" fill-opacity="0.11" stroke="#6a4a2c" stroke-opacity="0.22" stroke-width="0.9"/><rect x="414.7" y="135.6" width="23.6" height="9.3" fill="#fff4dc" fill-opacity="0.28" stroke="#6a4a2c" stroke-opacity="0.22" stroke-width="0.9"/><rect x="439.3" y="135.6" width="23.6" height="9.3" fill="#fff0d0" fill-opacity="0.23" stroke="#6a4a2c" stroke-opacity="0.22" stroke-width="0.9"/><rect x="463.9" y="135.6" width="23.6" height="9.3" fill="#ffe8c0" fill-opacity="0.15" stroke="#6a4a2c" stroke-opacity="0.22" stroke-width="0.9"/><rect x="488.5" y="135.6" width="23.6" height="9.3" fill="#fff4dc" fill-opacity="0.14" stroke="#6a4a2c" stroke-opacity="0.22" stroke-width="0.9"/><rect x="513.1" y="135.6" width="23.6" height="9.3" fill="#8a5a38" fill-opacity="0.25" stroke="#6a4a2c" stroke-opacity="0.22" stroke-width="0.9"/><rect x="537.7" y="135.6" width="11.3" height="9.3" fill="#8a5a38" fill-opacity="0.11" stroke="#6a4a2c" stroke-opacity="0.22" stroke-width="0.9"/><rect x="550.0" y="135.6" width="11.3" height="9.3" fill="#fff0d0" fill-opacity="0.30" stroke="#6a4a2c" stroke-opacity="0.22" stroke-width="0.9"/><rect x="562.3" y="135.6" width="23.6" height="9.3" fill="#8a5a38" fill-opacity="0.23" stroke="#6a4a2c" stroke-opacity="0.22" stroke-width="0.9"/><rect x="586.9" y="135.6" width="23.6" height="9.3" fill="#c87a48" fill-opacity="0.29" stroke="#6a4a2c" stroke-opacity="0.22" stroke-width="0.9"/><rect x="611.5" y="135.6" width="23.6" height="9.3" fill="#fff0d0" fill-opacity="0.11" stroke="#6a4a2c" stroke-opacity="0.22" stroke-width="0.9"/><rect x="636.1" y="135.6" width="23.6" height="9.3" fill="#7a5238" fill-opacity="0.21" stroke="#6a4a2c" stroke-opacity="0.22" stroke-width="0.9"/><rect x="660.7" y="135.6" width="23.6" height="9.3" fill="#7a5238" fill-opacity="0.00" stroke="#6a4a2c" stroke-opacity="0.22" stroke-width="0.9"/><rect x="685.3" y="135.6" width="23.6" height="9.3" fill="#fff0d0" fill-opacity="0.26" stroke="#6a4a2c" stroke-opacity="0.22" stroke-width="0.9"/><rect x="709.9" y="135.6" width="23.6" height="9.3" fill="#8a5a38" fill-opacity="0.00" stroke="#6a4a2c" stroke-opacity="0.22" stroke-width="0.9"/><rect x="302.1" y="145.9" width="23.6" height="9.3" fill="#c87a48" fill-opacity="0.08" stroke="#6a4a2c" stroke-opacity="0.22" stroke-width="0.9"/><rect x="326.7" y="145.9" width="23.6" height="9.3" fill="#c88a58" fill-opacity="0.24" stroke="#6a4a2c" stroke-opacity="0.22" stroke-width="0.9"/><rect x="351.3" y="145.9" width="23.6" height="9.3" fill="#ffe8c0" fill-opacity="0.30" stroke="#6a4a2c" stroke-opacity="0.22" stroke-width="0.9"/><rect x="375.9" y="145.9" width="23.6" height="9.3" fill="#7a5238" fill-opacity="0.25" stroke="#6a4a2c" stroke-opacity="0.22" stroke-width="0.9"/><rect x="400.5" y="145.9" width="23.6" height="9.3" fill="#7a5238" fill-opacity="0.22" stroke="#6a4a2c" stroke-opacity="0.22" stroke-width="0.9"/><rect x="425.1" y="145.9" width="23.6" height="9.3" fill="#fff4dc" fill-opacity="0.09" stroke="#6a4a2c" stroke-opacity="0.22" stroke-width="0.9"/><rect x="449.7" y="145.9" width="23.6" height="9.3" fill="#fff0d0" fill-opacity="0.19" stroke="#6a4a2c" stroke-opacity="0.22" stroke-width="0.9"/><rect x="474.3" y="145.9" width="23.6" height="9.3" fill="#8a5a38" fill-opacity="0.26" stroke="#6a4a2c" stroke-opacity="0.22" stroke-width="0.9"/><rect x="498.9" y="145.9" width="23.6" height="9.3" fill="#8a5a38" fill-opacity="0.13" stroke="#6a4a2c" stroke-opacity="0.22" stroke-width="0.9"/><rect x="523.5" y="145.9" width="23.6" height="9.3" fill="#c87a48" fill-opacity="0.12" stroke="#6a4a2c" stroke-opacity="0.22" stroke-width="0.9"/><rect x="548.1" y="145.9" width="11.3" height="9.3" fill="#fff0d0" fill-opacity="0.00" stroke="#6a4a2c" stroke-opacity="0.22" stroke-width="0.9"/><rect x="560.4" y="145.9" width="23.6" height="9.3" fill="#7a5238" fill-opacity="0.22" stroke="#6a4a2c" stroke-opacity="0.22" stroke-width="0.9"/><rect x="585.0" y="145.9" width="23.6" height="9.3" fill="#fff4dc" fill-opacity="0.09" stroke="#6a4a2c" stroke-opacity="0.22" stroke-width="0.9"/><rect x="609.6" y="145.9" width="23.6" height="9.3" fill="#fff0d0" fill-opacity="0.27" stroke="#6a4a2c" stroke-opacity="0.22" stroke-width="0.9"/><rect x="634.2" y="145.9" width="23.6" height="9.3" fill="#ffe8c0" fill-opacity="0.10" stroke="#6a4a2c" stroke-opacity="0.22" stroke-width="0.9"/><rect x="658.8" y="145.9" width="11.3" height="9.3" fill="#fff0d0" fill-opacity="0.19" stroke="#6a4a2c" stroke-opacity="0.22" stroke-width="0.9"/><rect x="671.1" y="145.9" width="23.6" height="9.3" fill="#fff4dc" fill-opacity="0.19" stroke="#6a4a2c" stroke-opacity="0.22" stroke-width="0.9"/><rect x="695.7" y="145.9" width="23.6" height="9.3" fill="#fff0d0" fill-opacity="0.00" stroke="#6a4a2c" stroke-opacity="0.22" stroke-width="0.9"/><rect x="720.3" y="145.9" width="23.6" height="9.3" fill="#fff0d0" fill-opacity="0.25" stroke="#6a4a2c" stroke-opacity="0.22" stroke-width="0.9"/><rect x="289.9" y="156.2" width="23.6" height="9.3" fill="#fff0d0" fill-opacity="0.17" stroke="#6a4a2c" stroke-opacity="0.22" stroke-width="0.9"/><rect x="314.5" y="156.2" width="23.6" height="9.3" fill="#fff4dc" fill-opacity="0.00" stroke="#6a4a2c" stroke-opacity="0.22" stroke-width="0.9"/><rect x="339.1" y="156.2" width="23.6" height="9.3" fill="#7a5238" fill-opacity="0.18" stroke="#6a4a2c" stroke-opacity="0.22" stroke-width="0.9"/><rect x="363.7" y="156.2" width="11.3" height="9.3" fill="#8a5a38" fill-opacity="0.23" stroke="#6a4a2c" stroke-opacity="0.22" stroke-width="0.9"/><rect x="376.0" y="156.2" width="23.6" height="9.3" fill="#8a5a38" fill-opacity="0.00" stroke="#6a4a2c" stroke-opacity="0.22" stroke-width="0.9"/><rect x="400.6" y="156.2" width="11.3" height="9.3" fill="#fff0d0" fill-opacity="0.15" stroke="#6a4a2c" stroke-opacity="0.22" stroke-width="0.9"/><rect x="412.9" y="156.2" width="23.6" height="9.3" fill="#8a5a38" fill-opacity="0.16" stroke="#6a4a2c" stroke-opacity="0.22" stroke-width="0.9"/><rect x="437.5" y="156.2" width="23.6" height="9.3" fill="#fff0d0" fill-opacity="0.28" stroke="#6a4a2c" stroke-opacity="0.22" stroke-width="0.9"/><rect x="462.1" y="156.2" width="23.6" height="9.3" fill="#c87a48" fill-opacity="0.00" stroke="#6a4a2c" stroke-opacity="0.22" stroke-width="0.9"/><rect x="486.7" y="156.2" width="23.6" height="9.3" fill="#ffe8c0" fill-opacity="0.29" stroke="#6a4a2c" stroke-opacity="0.22" stroke-width="0.9"/><rect x="511.3" y="156.2" width="23.6" height="9.3" fill="#fff0d0" fill-opacity="0.16" stroke="#6a4a2c" stroke-opacity="0.22" stroke-width="0.9"/><rect x="535.9" y="156.2" width="11.3" height="9.3" fill="#8a5a38" fill-opacity="0.10" stroke="#6a4a2c" stroke-opacity="0.22" stroke-width="0.9"/><rect x="548.2" y="156.2" width="11.3" height="9.3" fill="#c88a58" fill-opacity="0.00" stroke="#6a4a2c" stroke-opacity="0.22" stroke-width="0.9"/><rect x="560.5" y="156.2" width="23.6" height="9.3" fill="#c87a48" fill-opacity="0.14" stroke="#6a4a2c" stroke-opacity="0.22" stroke-width="0.9"/><rect x="585.1" y="156.2" width="23.6" height="9.3" fill="#c87a48" fill-opacity="0.19" stroke="#6a4a2c" stroke-opacity="0.22" stroke-width="0.9"/><rect x="609.7" y="156.2" width="11.3" height="9.3" fill="#c88a58" fill-opacity="0.14" stroke="#6a4a2c" stroke-opacity="0.22" stroke-width="0.9"/><rect x="622.0" y="156.2" width="23.6" height="9.3" fill="#fff0d0" fill-opacity="0.09" stroke="#6a4a2c" stroke-opacity="0.22" stroke-width="0.9"/><rect x="646.6" y="156.2" width="23.6" height="9.3" fill="#fff0d0" fill-opacity="0.00" stroke="#6a4a2c" stroke-opacity="0.22" stroke-width="0.9"/><rect x="671.2" y="156.2" width="23.6" height="9.3" fill="#fff0d0" fill-opacity="0.28" stroke="#6a4a2c" stroke-opacity="0.22" stroke-width="0.9"/><rect x="695.8" y="156.2" width="23.6" height="9.3" fill="#ffe8c0" fill-opacity="0.26" stroke="#6a4a2c" stroke-opacity="0.22" stroke-width="0.9"/><rect x="720.4" y="156.2" width="23.6" height="9.3" fill="#8a5a38" fill-opacity="0.00" stroke="#6a4a2c" stroke-opacity="0.22" stroke-width="0.9"/><rect x="301.8" y="166.5" width="23.6" height="9.3" fill="#7a5238" fill-opacity="0.00" stroke="#6a4a2c" stroke-opacity="0.22" stroke-width="0.9"/><rect x="326.4" y="166.5" width="23.6" height="9.3" fill="#8a5a38" fill-opacity="0.07" stroke="#6a4a2c" stroke-opacity="0.22" stroke-width="0.9"/><rect x="351.0" y="166.5" width="23.6" height="9.3" fill="#fff0d0" fill-opacity="0.12" stroke="#6a4a2c" stroke-opacity="0.22" stroke-width="0.9"/><rect x="375.6" y="166.5" width="23.6" height="9.3" fill="#8a5a38" fill-opacity="0.08" stroke="#6a4a2c" stroke-opacity="0.22" stroke-width="0.9"/><rect x="400.2" y="166.5" width="23.6" height="9.3" fill="#fff0d0" fill-opacity="0.17" stroke="#6a4a2c" stroke-opacity="0.22" stroke-width="0.9"/><rect x="424.8" y="166.5" width="23.6" height="9.3" fill="#c88a58" fill-opacity="0.00" stroke="#6a4a2c" stroke-opacity="0.22" stroke-width="0.9"/><rect x="449.4" y="166.5" width="23.6" height="9.3" fill="#fff0d0" fill-opacity="0.19" stroke="#6a4a2c" stroke-opacity="0.22" stroke-width="0.9"/><rect x="474.0" y="166.5" width="23.6" height="9.3" fill="#ffe8c0" fill-opacity="0.00" stroke="#6a4a2c" stroke-opacity="0.22" stroke-width="0.9"/><rect x="498.6" y="166.5" width="23.6" height="9.3" fill="#8a5a38" fill-opacity="0.28" stroke="#6a4a2c" stroke-opacity="0.22" stroke-width="0.9"/><rect x="523.2" y="166.5" width="23.6" height="9.3" fill="#8a5a38" fill-opacity="0.13" stroke="#6a4a2c" stroke-opacity="0.22" stroke-width="0.9"/><rect x="547.8" y="166.5" width="23.6" height="9.3" fill="#8a5a38" fill-opacity="0.14" stroke="#6a4a2c" stroke-opacity="0.22" stroke-width="0.9"/><rect x="572.4" y="166.5" width="23.6" height="9.3" fill="#fff0d0" fill-opacity="0.00" stroke="#6a4a2c" stroke-opacity="0.22" stroke-width="0.9"/><rect x="597.0" y="166.5" width="23.6" height="9.3" fill="#fff4dc" fill-opacity="0.19" stroke="#6a4a2c" stroke-opacity="0.22" stroke-width="0.9"/><rect x="621.6" y="166.5" width="23.6" height="9.3" fill="#8a5a38" fill-opacity="0.28" stroke="#6a4a2c" stroke-opacity="0.22" stroke-width="0.9"/><rect x="646.2" y="166.5" width="23.6" height="9.3" fill="#c88a58" fill-opacity="0.22" stroke="#6a4a2c" stroke-opacity="0.22" stroke-width="0.9"/><rect x="670.8" y="166.5" width="23.6" height="9.3" fill="#c88a58" fill-opacity="0.00" stroke="#6a4a2c" stroke-opacity="0.22" stroke-width="0.9"/><rect x="695.4" y="166.5" width="23.6" height="9.3" fill="#8a5a38" fill-opacity="0.30" stroke="#6a4a2c" stroke-opacity="0.22" stroke-width="0.9"/><rect x="720.0" y="166.5" width="23.6" height="9.3" fill="#ffe8c0" fill-opacity="0.16" stroke="#6a4a2c" stroke-opacity="0.22" stroke-width="0.9"/><rect x="289.3" y="176.8" width="23.6" height="9.3" fill="#fff0d0" fill-opacity="0.00" stroke="#6a4a2c" stroke-opacity="0.22" stroke-width="0.9"/><rect x="313.9" y="176.8" width="23.6" height="9.3" fill="#8a5a38" fill-opacity="0.16" stroke="#6a4a2c" stroke-opacity="0.22" stroke-width="0.9"/><rect x="338.5" y="176.8" width="23.6" height="9.3" fill="#c88a58" fill-opacity="0.27" stroke="#6a4a2c" stroke-opacity="0.22" stroke-width="0.9"/><rect x="363.1" y="176.8" width="23.6" height="9.3" fill="#8a5a38" fill-opacity="0.00" stroke="#6a4a2c" stroke-opacity="0.22" stroke-width="0.9"/><rect x="387.7" y="176.8" width="23.6" height="9.3" fill="#7a5238" fill-opacity="0.10" stroke="#6a4a2c" stroke-opacity="0.22" stroke-width="0.9"/><rect x="412.3" y="176.8" width="23.6" height="9.3" fill="#8a5a38" fill-opacity="0.15" stroke="#6a4a2c" stroke-opacity="0.22" stroke-width="0.9"/><rect x="436.9" y="176.8" width="23.6" height="9.3" fill="#fff4dc" fill-opacity="0.00" stroke="#6a4a2c" stroke-opacity="0.22" stroke-width="0.9"/><rect x="461.5" y="176.8" width="23.6" height="9.3" fill="#8a5a38" fill-opacity="0.11" stroke="#6a4a2c" stroke-opacity="0.22" stroke-width="0.9"/><rect x="486.1" y="176.8" width="23.6" height="9.3" fill="#c88a58" fill-opacity="0.08" stroke="#6a4a2c" stroke-opacity="0.22" stroke-width="0.9"/><rect x="510.7" y="176.8" width="23.6" height="9.3" fill="#8a5a38" fill-opacity="0.12" stroke="#6a4a2c" stroke-opacity="0.22" stroke-width="0.9"/><rect x="535.3" y="176.8" width="23.6" height="9.3" fill="#fff0d0" fill-opacity="0.09" stroke="#6a4a2c" stroke-opacity="0.22" stroke-width="0.9"/><rect x="559.9" y="176.8" width="23.6" height="9.3" fill="#fff0d0" fill-opacity="0.13" stroke="#6a4a2c" stroke-opacity="0.22" stroke-width="0.9"/><rect x="584.5" y="176.8" width="23.6" height="9.3" fill="#fff4dc" fill-opacity="0.26" stroke="#6a4a2c" stroke-opacity="0.22" stroke-width="0.9"/><rect x="609.1" y="176.8" width="23.6" height="9.3" fill="#c88a58" fill-opacity="0.24" stroke="#6a4a2c" stroke-opacity="0.22" stroke-width="0.9"/><rect x="633.7" y="176.8" width="23.6" height="9.3" fill="#ffe8c0" fill-opacity="0.00" stroke="#6a4a2c" stroke-opacity="0.22" stroke-width="0.9"/><rect x="658.3" y="176.8" width="23.6" height="9.3" fill="#ffe8c0" fill-opacity="0.07" stroke="#6a4a2c" stroke-opacity="0.22" stroke-width="0.9"/><rect x="682.9" y="176.8" width="23.6" height="9.3" fill="#c88a58" fill-opacity="0.00" stroke="#6a4a2c" stroke-opacity="0.22" stroke-width="0.9"/><rect x="707.5" y="176.8" width="23.6" height="9.3" fill="#fff4dc" fill-opacity="0.09" stroke="#6a4a2c" stroke-opacity="0.22" stroke-width="0.9"/><rect x="302.3" y="187.1" width="23.6" height="9.3" fill="#fff0d0" fill-opacity="0.26" stroke="#6a4a2c" stroke-opacity="0.22" stroke-width="0.9"/><rect x="326.9" y="187.1" width="23.6" height="9.3" fill="#8a5a38" fill-opacity="0.08" stroke="#6a4a2c" stroke-opacity="0.22" stroke-width="0.9"/><rect x="351.5" y="187.1" width="23.6" height="9.3" fill="#c87a48" fill-opacity="0.29" stroke="#6a4a2c" stroke-opacity="0.22" stroke-width="0.9"/><rect x="376.1" y="187.1" width="11.3" height="9.3" fill="#fff4dc" fill-opacity="0.00" stroke="#6a4a2c" stroke-opacity="0.22" stroke-width="0.9"/><rect x="388.4" y="187.1" width="23.6" height="9.3" fill="#fff4dc" fill-opacity="0.22" stroke="#6a4a2c" stroke-opacity="0.22" stroke-width="0.9"/><rect x="413.0" y="187.1" width="11.3" height="9.3" fill="#7a5238" fill-opacity="0.25" stroke="#6a4a2c" stroke-opacity="0.22" stroke-width="0.9"/><rect x="425.3" y="187.1" width="23.6" height="9.3" fill="#fff4dc" fill-opacity="0.00" stroke="#6a4a2c" stroke-opacity="0.22" stroke-width="0.9"/><rect x="449.9" y="187.1" width="23.6" height="9.3" fill="#fff0d0" fill-opacity="0.24" stroke="#6a4a2c" stroke-opacity="0.22" stroke-width="0.9"/><rect x="474.5" y="187.1" width="11.3" height="9.3" fill="#fff0d0" fill-opacity="0.26" stroke="#6a4a2c" stroke-opacity="0.22" stroke-width="0.9"/><rect x="486.8" y="187.1" width="23.6" height="9.3" fill="#8a5a38" fill-opacity="0.12" stroke="#6a4a2c" stroke-opacity="0.22" stroke-width="0.9"/><rect x="511.4" y="187.1" width="23.6" height="9.3" fill="#7a5238" fill-opacity="0.00" stroke="#6a4a2c" stroke-opacity="0.22" stroke-width="0.9"/><rect x="536.0" y="187.1" width="11.3" height="9.3" fill="#8a5a38" fill-opacity="0.24" stroke="#6a4a2c" stroke-opacity="0.22" stroke-width="0.9"/><rect x="548.3" y="187.1" width="23.6" height="9.3" fill="#8a5a38" fill-opacity="0.08" stroke="#6a4a2c" stroke-opacity="0.22" stroke-width="0.9"/><rect x="572.9" y="187.1" width="23.6" height="9.3" fill="#8a5a38" fill-opacity="0.21" stroke="#6a4a2c" stroke-opacity="0.22" stroke-width="0.9"/><rect x="597.5" y="187.1" width="23.6" height="9.3" fill="#fff0d0" fill-opacity="0.18" stroke="#6a4a2c" stroke-opacity="0.22" stroke-width="0.9"/><rect x="622.1" y="187.1" width="23.6" height="9.3" fill="#8a5a38" fill-opacity="0.22" stroke="#6a4a2c" stroke-opacity="0.22" stroke-width="0.9"/><rect x="646.7" y="187.1" width="23.6" height="9.3" fill="#8a5a38" fill-opacity="0.17" stroke="#6a4a2c" stroke-opacity="0.22" stroke-width="0.9"/><rect x="671.3" y="187.1" width="11.3" height="9.3" fill="#fff4dc" fill-opacity="0.11" stroke="#6a4a2c" stroke-opacity="0.22" stroke-width="0.9"/><rect x="683.6" y="187.1" width="23.6" height="9.3" fill="#fff0d0" fill-opacity="0.00" stroke="#6a4a2c" stroke-opacity="0.22" stroke-width="0.9"/><rect x="708.2" y="187.1" width="23.6" height="9.3" fill="#fff4dc" fill-opacity="0.29" stroke="#6a4a2c" stroke-opacity="0.22" stroke-width="0.9"/><rect x="289.7" y="197.4" width="23.6" height="9.3" fill="#8a5a38" fill-opacity="0.08" stroke="#6a4a2c" stroke-opacity="0.22" stroke-width="0.9"/><rect x="314.3" y="197.4" width="23.6" height="9.3" fill="#fff4dc" fill-opacity="0.12" stroke="#6a4a2c" stroke-opacity="0.22" stroke-width="0.9"/><rect x="338.9" y="197.4" width="23.6" height="9.3" fill="#fff4dc" fill-opacity="0.13" stroke="#6a4a2c" stroke-opacity="0.22" stroke-width="0.9"/><rect x="363.5" y="197.4" width="23.6" height="9.3" fill="#8a5a38" fill-opacity="0.18" stroke="#6a4a2c" stroke-opacity="0.22" stroke-width="0.9"/><rect x="388.1" y="197.4" width="11.3" height="9.3" fill="#ffe8c0" fill-opacity="0.06" stroke="#6a4a2c" stroke-opacity="0.22" stroke-width="0.9"/><rect x="400.4" y="197.4" width="11.3" height="9.3" fill="#c88a58" fill-opacity="0.13" stroke="#6a4a2c" stroke-opacity="0.22" stroke-width="0.9"/><rect x="412.7" y="197.4" width="23.6" height="9.3" fill="#c88a58" fill-opacity="0.14" stroke="#6a4a2c" stroke-opacity="0.22" stroke-width="0.9"/><rect x="437.3" y="197.4" width="23.6" height="9.3" fill="#c87a48" fill-opacity="0.26" stroke="#6a4a2c" stroke-opacity="0.22" stroke-width="0.9"/><rect x="461.9" y="197.4" width="23.6" height="9.3" fill="#8a5a38" fill-opacity="0.00" stroke="#6a4a2c" stroke-opacity="0.22" stroke-width="0.9"/><rect x="486.5" y="197.4" width="23.6" height="9.3" fill="#8a5a38" fill-opacity="0.12" stroke="#6a4a2c" stroke-opacity="0.22" stroke-width="0.9"/><rect x="511.1" y="197.4" width="23.6" height="9.3" fill="#fff0d0" fill-opacity="0.15" stroke="#6a4a2c" stroke-opacity="0.22" stroke-width="0.9"/><rect x="535.7" y="197.4" width="11.3" height="9.3" fill="#fff0d0" fill-opacity="0.13" stroke="#6a4a2c" stroke-opacity="0.22" stroke-width="0.9"/><rect x="548.0" y="197.4" width="23.6" height="9.3" fill="#8a5a38" fill-opacity="0.00" stroke="#6a4a2c" stroke-opacity="0.22" stroke-width="0.9"/><rect x="572.6" y="197.4" width="23.6" height="9.3" fill="#8a5a38" fill-opacity="0.00" stroke="#6a4a2c" stroke-opacity="0.22" stroke-width="0.9"/><rect x="597.2" y="197.4" width="23.6" height="9.3" fill="#c87a48" fill-opacity="0.11" stroke="#6a4a2c" stroke-opacity="0.22" stroke-width="0.9"/><rect x="621.8" y="197.4" width="23.6" height="9.3" fill="#c88a58" fill-opacity="0.27" stroke="#6a4a2c" stroke-opacity="0.22" stroke-width="0.9"/><rect x="646.4" y="197.4" width="23.6" height="9.3" fill="#fff4dc" fill-opacity="0.19" stroke="#6a4a2c" stroke-opacity="0.22" stroke-width="0.9"/><rect x="671.0" y="197.4" width="23.6" height="9.3" fill="#c88a58" fill-opacity="0.17" stroke="#6a4a2c" stroke-opacity="0.22" stroke-width="0.9"/><rect x="695.6" y="197.4" width="23.6" height="9.3" fill="#8a5a38" fill-opacity="0.18" stroke="#6a4a2c" stroke-opacity="0.22" stroke-width="0.9"/><rect x="720.2" y="197.4" width="23.6" height="9.3" fill="#7a5238" fill-opacity="0.16" stroke="#6a4a2c" stroke-opacity="0.22" stroke-width="0.9"/><rect x="301.3" y="207.7" width="23.6" height="9.3" fill="#8a5a38" fill-opacity="0.16" stroke="#6a4a2c" stroke-opacity="0.22" stroke-width="0.9"/><rect x="325.9" y="207.7" width="23.6" height="9.3" fill="#fff4dc" fill-opacity="0.22" stroke="#6a4a2c" stroke-opacity="0.22" stroke-width="0.9"/><rect x="350.5" y="207.7" width="23.6" height="9.3" fill="#ffe8c0" fill-opacity="0.08" stroke="#6a4a2c" stroke-opacity="0.22" stroke-width="0.9"/><rect x="375.1" y="207.7" width="23.6" height="9.3" fill="#7a5238" fill-opacity="0.00" stroke="#6a4a2c" stroke-opacity="0.22" stroke-width="0.9"/><rect x="399.7" y="207.7" width="23.6" height="9.3" fill="#c87a48" fill-opacity="0.30" stroke="#6a4a2c" stroke-opacity="0.22" stroke-width="0.9"/><rect x="424.3" y="207.7" width="11.3" height="9.3" fill="#fff4dc" fill-opacity="0.11" stroke="#6a4a2c" stroke-opacity="0.22" stroke-width="0.9"/><rect x="436.6" y="207.7" width="23.6" height="9.3" fill="#fff4dc" fill-opacity="0.08" stroke="#6a4a2c" stroke-opacity="0.22" stroke-width="0.9"/><rect x="461.2" y="207.7" width="23.6" height="9.3" fill="#8a5a38" fill-opacity="0.27" stroke="#6a4a2c" stroke-opacity="0.22" stroke-width="0.9"/><rect x="485.8" y="207.7" width="23.6" height="9.3" fill="#c88a58" fill-opacity="0.00" stroke="#6a4a2c" stroke-opacity="0.22" stroke-width="0.9"/><rect x="510.4" y="207.7" width="11.3" height="9.3" fill="#8a5a38" fill-opacity="0.15" stroke="#6a4a2c" stroke-opacity="0.22" stroke-width="0.9"/><rect x="522.7" y="207.7" width="23.6" height="9.3" fill="#7a5238" fill-opacity="0.13" stroke="#6a4a2c" stroke-opacity="0.22" stroke-width="0.9"/><rect x="547.3" y="207.7" width="23.6" height="9.3" fill="#fff4dc" fill-opacity="0.19" stroke="#6a4a2c" stroke-opacity="0.22" stroke-width="0.9"/><rect x="571.9" y="207.7" width="23.6" height="9.3" fill="#8a5a38" fill-opacity="0.15" stroke="#6a4a2c" stroke-opacity="0.22" stroke-width="0.9"/><rect x="596.5" y="207.7" width="23.6" height="9.3" fill="#8a5a38" fill-opacity="0.26" stroke="#6a4a2c" stroke-opacity="0.22" stroke-width="0.9"/><rect x="621.1" y="207.7" width="23.6" height="9.3" fill="#c88a58" fill-opacity="0.23" stroke="#6a4a2c" stroke-opacity="0.22" stroke-width="0.9"/><rect x="645.7" y="207.7" width="11.3" height="9.3" fill="#7a5238" fill-opacity="0.00" stroke="#6a4a2c" stroke-opacity="0.22" stroke-width="0.9"/><rect x="658.0" y="207.7" width="23.6" height="9.3" fill="#fff4dc" fill-opacity="0.27" stroke="#6a4a2c" stroke-opacity="0.22" stroke-width="0.9"/><rect x="682.6" y="207.7" width="11.3" height="9.3" fill="#fff0d0" fill-opacity="0.11" stroke="#6a4a2c" stroke-opacity="0.22" stroke-width="0.9"/><rect x="694.9" y="207.7" width="23.6" height="9.3" fill="#fff0d0" fill-opacity="0.29" stroke="#6a4a2c" stroke-opacity="0.22" stroke-width="0.9"/><rect x="719.5" y="207.7" width="23.6" height="9.3" fill="#7a5238" fill-opacity="0.08" stroke="#6a4a2c" stroke-opacity="0.22" stroke-width="0.9"/><rect x="291.0" y="218.0" width="23.6" height="9.3" fill="#8a5a38" fill-opacity="0.20" stroke="#6a4a2c" stroke-opacity="0.22" stroke-width="0.9"/><rect x="315.6" y="218.0" width="23.6" height="9.3" fill="#8a5a38" fill-opacity="0.29" stroke="#6a4a2c" stroke-opacity="0.22" stroke-width="0.9"/><rect x="340.2" y="218.0" width="23.6" height="9.3" fill="#c88a58" fill-opacity="0.23" stroke="#6a4a2c" stroke-opacity="0.22" stroke-width="0.9"/><rect x="364.8" y="218.0" width="23.6" height="9.3" fill="#8a5a38" fill-opacity="0.19" stroke="#6a4a2c" stroke-opacity="0.22" stroke-width="0.9"/><rect x="389.4" y="218.0" width="23.6" height="9.3" fill="#8a5a38" fill-opacity="0.11" stroke="#6a4a2c" stroke-opacity="0.22" stroke-width="0.9"/><rect x="414.0" y="218.0" width="23.6" height="9.3" fill="#fff4dc" fill-opacity="0.13" stroke="#6a4a2c" stroke-opacity="0.22" stroke-width="0.9"/><rect x="438.6" y="218.0" width="11.3" height="9.3" fill="#c87a48" fill-opacity="0.21" stroke="#6a4a2c" stroke-opacity="0.22" stroke-width="0.9"/><rect x="450.9" y="218.0" width="23.6" height="9.3" fill="#8a5a38" fill-opacity="0.19" stroke="#6a4a2c" stroke-opacity="0.22" stroke-width="0.9"/><rect x="475.5" y="218.0" width="23.6" height="9.3" fill="#8a5a38" fill-opacity="0.00" stroke="#6a4a2c" stroke-opacity="0.22" stroke-width="0.9"/><rect x="500.1" y="218.0" width="23.6" height="9.3" fill="#7a5238" fill-opacity="0.27" stroke="#6a4a2c" stroke-opacity="0.22" stroke-width="0.9"/><rect x="524.7" y="218.0" width="23.6" height="9.3" fill="#8a5a38" fill-opacity="0.11" stroke="#6a4a2c" stroke-opacity="0.22" stroke-width="0.9"/><rect x="549.3" y="218.0" width="11.3" height="9.3" fill="#8a5a38" fill-opacity="0.00" stroke="#6a4a2c" stroke-opacity="0.22" stroke-width="0.9"/><rect x="561.6" y="218.0" width="11.3" height="9.3" fill="#c87a48" fill-opacity="0.23" stroke="#6a4a2c" stroke-opacity="0.22" stroke-width="0.9"/><rect x="573.9" y="218.0" width="23.6" height="9.3" fill="#8a5a38" fill-opacity="0.06" stroke="#6a4a2c" stroke-opacity="0.22" stroke-width="0.9"/><rect x="598.5" y="218.0" width="23.6" height="9.3" fill="#fff4dc" fill-opacity="0.08" stroke="#6a4a2c" stroke-opacity="0.22" stroke-width="0.9"/><rect x="623.1" y="218.0" width="11.3" height="9.3" fill="#8a5a38" fill-opacity="0.00" stroke="#6a4a2c" stroke-opacity="0.22" stroke-width="0.9"/><rect x="635.4" y="218.0" width="23.6" height="9.3" fill="#8a5a38" fill-opacity="0.12" stroke="#6a4a2c" stroke-opacity="0.22" stroke-width="0.9"/><rect x="660.0" y="218.0" width="23.6" height="9.3" fill="#7a5238" fill-opacity="0.21" stroke="#6a4a2c" stroke-opacity="0.22" stroke-width="0.9"/><rect x="684.6" y="218.0" width="23.6" height="9.3" fill="#fff0d0" fill-opacity="0.29" stroke="#6a4a2c" stroke-opacity="0.22" stroke-width="0.9"/><rect x="709.2" y="218.0" width="23.6" height="9.3" fill="#fff0d0" fill-opacity="0.00" stroke="#6a4a2c" stroke-opacity="0.22" stroke-width="0.9"/><rect x="301.1" y="228.3" width="23.6" height="9.3" fill="#fff0d0" fill-opacity="0.23" stroke="#6a4a2c" stroke-opacity="0.22" stroke-width="0.9"/><rect x="325.7" y="228.3" width="23.6" height="9.3" fill="#c87a48" fill-opacity="0.24" stroke="#6a4a2c" stroke-opacity="0.22" stroke-width="0.9"/><rect x="350.3" y="228.3" width="23.6" height="9.3" fill="#c87a48" fill-opacity="0.00" stroke="#6a4a2c" stroke-opacity="0.22" stroke-width="0.9"/><rect x="374.9" y="228.3" width="23.6" height="9.3" fill="#fff4dc" fill-opacity="0.24" stroke="#6a4a2c" stroke-opacity="0.22" stroke-width="0.9"/><rect x="399.5" y="228.3" width="23.6" height="9.3" fill="#c88a58" fill-opacity="0.26" stroke="#6a4a2c" stroke-opacity="0.22" stroke-width="0.9"/><rect x="424.1" y="228.3" width="23.6" height="9.3" fill="#fff0d0" fill-opacity="0.06" stroke="#6a4a2c" stroke-opacity="0.22" stroke-width="0.9"/><rect x="448.7" y="228.3" width="23.6" height="9.3" fill="#c88a58" fill-opacity="0.29" stroke="#6a4a2c" stroke-opacity="0.22" stroke-width="0.9"/><rect x="473.3" y="228.3" width="23.6" height="9.3" fill="#8a5a38" fill-opacity="0.15" stroke="#6a4a2c" stroke-opacity="0.22" stroke-width="0.9"/><rect x="497.9" y="228.3" width="23.6" height="9.3" fill="#c88a58" fill-opacity="0.00" stroke="#6a4a2c" stroke-opacity="0.22" stroke-width="0.9"/><rect x="522.5" y="228.3" width="23.6" height="9.3" fill="#7a5238" fill-opacity="0.11" stroke="#6a4a2c" stroke-opacity="0.22" stroke-width="0.9"/><rect x="547.1" y="228.3" width="23.6" height="9.3" fill="#8a5a38" fill-opacity="0.00" stroke="#6a4a2c" stroke-opacity="0.22" stroke-width="0.9"/><rect x="571.7" y="228.3" width="23.6" height="9.3" fill="#7a5238" fill-opacity="0.07" stroke="#6a4a2c" stroke-opacity="0.22" stroke-width="0.9"/><rect x="596.3" y="228.3" width="11.3" height="9.3" fill="#c88a58" fill-opacity="0.07" stroke="#6a4a2c" stroke-opacity="0.22" stroke-width="0.9"/><rect x="608.6" y="228.3" width="23.6" height="9.3" fill="#fff0d0" fill-opacity="0.12" stroke="#6a4a2c" stroke-opacity="0.22" stroke-width="0.9"/><rect x="633.2" y="228.3" width="23.6" height="9.3" fill="#c87a48" fill-opacity="0.15" stroke="#6a4a2c" stroke-opacity="0.22" stroke-width="0.9"/><rect x="657.8" y="228.3" width="23.6" height="9.3" fill="#fff0d0" fill-opacity="0.00" stroke="#6a4a2c" stroke-opacity="0.22" stroke-width="0.9"/><rect x="682.4" y="228.3" width="23.6" height="9.3" fill="#c87a48" fill-opacity="0.28" stroke="#6a4a2c" stroke-opacity="0.22" stroke-width="0.9"/><rect x="707.0" y="228.3" width="23.6" height="9.3" fill="#fff0d0" fill-opacity="0.07" stroke="#6a4a2c" stroke-opacity="0.22" stroke-width="0.9"/><rect x="288.8" y="238.6" width="11.3" height="9.3" fill="#7a5238" fill-opacity="0.29" stroke="#6a4a2c" stroke-opacity="0.22" stroke-width="0.9"/><rect x="301.1" y="238.6" width="11.3" height="9.3" fill="#c88a58" fill-opacity="0.26" stroke="#6a4a2c" stroke-opacity="0.22" stroke-width="0.9"/><rect x="313.4" y="238.6" width="23.6" height="9.3" fill="#ffe8c0" fill-opacity="0.00" stroke="#6a4a2c" stroke-opacity="0.22" stroke-width="0.9"/><rect x="338.0" y="238.6" width="23.6" height="9.3" fill="#8a5a38" fill-opacity="0.00" stroke="#6a4a2c" stroke-opacity="0.22" stroke-width="0.9"/><rect x="362.6" y="238.6" width="23.6" height="9.3" fill="#8a5a38" fill-opacity="0.14" stroke="#6a4a2c" stroke-opacity="0.22" stroke-width="0.9"/><rect x="387.2" y="238.6" width="23.6" height="9.3" fill="#fff0d0" fill-opacity="0.18" stroke="#6a4a2c" stroke-opacity="0.22" stroke-width="0.9"/><rect x="411.8" y="238.6" width="11.3" height="9.3" fill="#8a5a38" fill-opacity="0.16" stroke="#6a4a2c" stroke-opacity="0.22" stroke-width="0.9"/><rect x="424.1" y="238.6" width="23.6" height="9.3" fill="#fff4dc" fill-opacity="0.19" stroke="#6a4a2c" stroke-opacity="0.22" stroke-width="0.9"/><rect x="448.7" y="238.6" width="23.6" height="9.3" fill="#fff0d0" fill-opacity="0.00" stroke="#6a4a2c" stroke-opacity="0.22" stroke-width="0.9"/><rect x="473.3" y="238.6" width="23.6" height="9.3" fill="#fff0d0" fill-opacity="0.11" stroke="#6a4a2c" stroke-opacity="0.22" stroke-width="0.9"/><rect x="497.9" y="238.6" width="11.3" height="9.3" fill="#7a5238" fill-opacity="0.10" stroke="#6a4a2c" stroke-opacity="0.22" stroke-width="0.9"/><rect x="510.2" y="238.6" width="23.6" height="9.3" fill="#8a5a38" fill-opacity="0.24" stroke="#6a4a2c" stroke-opacity="0.22" stroke-width="0.9"/><rect x="534.8" y="238.6" width="23.6" height="9.3" fill="#8a5a38" fill-opacity="0.13" stroke="#6a4a2c" stroke-opacity="0.22" stroke-width="0.9"/><rect x="559.4" y="238.6" width="23.6" height="9.3" fill="#8a5a38" fill-opacity="0.24" stroke="#6a4a2c" stroke-opacity="0.22" stroke-width="0.9"/><rect x="584.0" y="238.6" width="23.6" height="9.3" fill="#ffe8c0" fill-opacity="0.12" stroke="#6a4a2c" stroke-opacity="0.22" stroke-width="0.9"/><rect x="608.6" y="238.6" width="23.6" height="9.3" fill="#8a5a38" fill-opacity="0.14" stroke="#6a4a2c" stroke-opacity="0.22" stroke-width="0.9"/><rect x="633.2" y="238.6" width="11.3" height="9.3" fill="#8a5a38" fill-opacity="0.18" stroke="#6a4a2c" stroke-opacity="0.22" stroke-width="0.9"/><rect x="645.5" y="238.6" width="23.6" height="9.3" fill="#fff0d0" fill-opacity="0.22" stroke="#6a4a2c" stroke-opacity="0.22" stroke-width="0.9"/><rect x="670.1" y="238.6" width="23.6" height="9.3" fill="#7a5238" fill-opacity="0.27" stroke="#6a4a2c" stroke-opacity="0.22" stroke-width="0.9"/><rect x="694.7" y="238.6" width="23.6" height="9.3" fill="#c87a48" fill-opacity="0.00" stroke="#6a4a2c" stroke-opacity="0.22" stroke-width="0.9"/><rect x="719.3" y="238.6" width="23.6" height="9.3" fill="#8a5a38" fill-opacity="0.00" stroke="#6a4a2c" stroke-opacity="0.22" stroke-width="0.9"/><rect x="300.7" y="248.9" width="23.6" height="9.3" fill="#8a5a38" fill-opacity="0.28" stroke="#6a4a2c" stroke-opacity="0.22" stroke-width="0.9"/><rect x="325.3" y="248.9" width="23.6" height="9.3" fill="#ffe8c0" fill-opacity="0.17" stroke="#6a4a2c" stroke-opacity="0.22" stroke-width="0.9"/><rect x="349.9" y="248.9" width="23.6" height="9.3" fill="#fff0d0" fill-opacity="0.09" stroke="#6a4a2c" stroke-opacity="0.22" stroke-width="0.9"/><rect x="374.5" y="248.9" width="23.6" height="9.3" fill="#c87a48" fill-opacity="0.11" stroke="#6a4a2c" stroke-opacity="0.22" stroke-width="0.9"/><rect x="399.1" y="248.9" width="23.6" height="9.3" fill="#fff0d0" fill-opacity="0.11" stroke="#6a4a2c" stroke-opacity="0.22" stroke-width="0.9"/><rect x="423.7" y="248.9" width="23.6" height="9.3" fill="#8a5a38" fill-opacity="0.26" stroke="#6a4a2c" stroke-opacity="0.22" stroke-width="0.9"/><rect x="448.3" y="248.9" width="23.6" height="9.3" fill="#c87a48" fill-opacity="0.10" stroke="#6a4a2c" stroke-opacity="0.22" stroke-width="0.9"/><rect x="472.9" y="248.9" width="23.6" height="9.3" fill="#fff0d0" fill-opacity="0.25" stroke="#6a4a2c" stroke-opacity="0.22" stroke-width="0.9"/><rect x="497.5" y="248.9" width="23.6" height="9.3" fill="#c88a58" fill-opacity="0.08" stroke="#6a4a2c" stroke-opacity="0.22" stroke-width="0.9"/><rect x="522.1" y="248.9" width="11.3" height="9.3" fill="#ffe8c0" fill-opacity="0.21" stroke="#6a4a2c" stroke-opacity="0.22" stroke-width="0.9"/><rect x="534.4" y="248.9" width="23.6" height="9.3" fill="#c88a58" fill-opacity="0.23" stroke="#6a4a2c" stroke-opacity="0.22" stroke-width="0.9"/><rect x="559.0" y="248.9" width="11.3" height="9.3" fill="#8a5a38" fill-opacity="0.00" stroke="#6a4a2c" stroke-opacity="0.22" stroke-width="0.9"/><rect x="571.3" y="248.9" width="11.3" height="9.3" fill="#8a5a38" fill-opacity="0.00" stroke="#6a4a2c" stroke-opacity="0.22" stroke-width="0.9"/><rect x="583.6" y="248.9" width="23.6" height="9.3" fill="#c87a48" fill-opacity="0.16" stroke="#6a4a2c" stroke-opacity="0.22" stroke-width="0.9"/><rect x="608.2" y="248.9" width="23.6" height="9.3" fill="#c87a48" fill-opacity="0.00" stroke="#6a4a2c" stroke-opacity="0.22" stroke-width="0.9"/><rect x="632.8" y="248.9" width="23.6" height="9.3" fill="#c88a58" fill-opacity="0.11" stroke="#6a4a2c" stroke-opacity="0.22" stroke-width="0.9"/><rect x="657.4" y="248.9" width="23.6" height="9.3" fill="#ffe8c0" fill-opacity="0.16" stroke="#6a4a2c" stroke-opacity="0.22" stroke-width="0.9"/><rect x="682.0" y="248.9" width="23.6" height="9.3" fill="#c87a48" fill-opacity="0.17" stroke="#6a4a2c" stroke-opacity="0.22" stroke-width="0.9"/><rect x="706.6" y="248.9" width="23.6" height="9.3" fill="#fff0d0" fill-opacity="0.19" stroke="#6a4a2c" stroke-opacity="0.22" stroke-width="0.9"/><rect x="290.5" y="259.2" width="11.3" height="9.3" fill="#c87a48" fill-opacity="0.24" stroke="#6a4a2c" stroke-opacity="0.22" stroke-width="0.9"/><rect x="302.8" y="259.2" width="23.6" height="9.3" fill="#8a5a38" fill-opacity="0.10" stroke="#6a4a2c" stroke-opacity="0.22" stroke-width="0.9"/><rect x="327.4" y="259.2" width="23.6" height="9.3" fill="#fff0d0" fill-opacity="0.00" stroke="#6a4a2c" stroke-opacity="0.22" stroke-width="0.9"/><rect x="352.0" y="259.2" width="11.3" height="9.3" fill="#8a5a38" fill-opacity="0.13" stroke="#6a4a2c" stroke-opacity="0.22" stroke-width="0.9"/><rect x="364.3" y="259.2" width="23.6" height="9.3" fill="#7a5238" fill-opacity="0.00" stroke="#6a4a2c" stroke-opacity="0.22" stroke-width="0.9"/><rect x="388.9" y="259.2" width="23.6" height="9.3" fill="#c88a58" fill-opacity="0.08" stroke="#6a4a2c" stroke-opacity="0.22" stroke-width="0.9"/><rect x="413.5" y="259.2" width="23.6" height="9.3" fill="#ffe8c0" fill-opacity="0.21" stroke="#6a4a2c" stroke-opacity="0.22" stroke-width="0.9"/><rect x="438.1" y="259.2" width="23.6" height="9.3" fill="#8a5a38" fill-opacity="0.26" stroke="#6a4a2c" stroke-opacity="0.22" stroke-width="0.9"/><rect x="462.7" y="259.2" width="23.6" height="9.3" fill="#fff0d0" fill-opacity="0.16" stroke="#6a4a2c" stroke-opacity="0.22" stroke-width="0.9"/><rect x="487.3" y="259.2" width="23.6" height="9.3" fill="#c87a48" fill-opacity="0.09" stroke="#6a4a2c" stroke-opacity="0.22" stroke-width="0.9"/><rect x="511.9" y="259.2" width="23.6" height="9.3" fill="#8a5a38" fill-opacity="0.00" stroke="#6a4a2c" stroke-opacity="0.22" stroke-width="0.9"/><rect x="536.5" y="259.2" width="23.6" height="9.3" fill="#fff0d0" fill-opacity="0.00" stroke="#6a4a2c" stroke-opacity="0.22" stroke-width="0.9"/><rect x="561.1" y="259.2" width="23.6" height="9.3" fill="#fff0d0" fill-opacity="0.00" stroke="#6a4a2c" stroke-opacity="0.22" stroke-width="0.9"/><rect x="585.7" y="259.2" width="11.3" height="9.3" fill="#fff4dc" fill-opacity="0.26" stroke="#6a4a2c" stroke-opacity="0.22" stroke-width="0.9"/><rect x="598.0" y="259.2" width="23.6" height="9.3" fill="#8a5a38" fill-opacity="0.20" stroke="#6a4a2c" stroke-opacity="0.22" stroke-width="0.9"/><rect x="622.6" y="259.2" width="11.3" height="9.3" fill="#c87a48" fill-opacity="0.17" stroke="#6a4a2c" stroke-opacity="0.22" stroke-width="0.9"/><rect x="634.9" y="259.2" width="11.3" height="9.3" fill="#fff0d0" fill-opacity="0.21" stroke="#6a4a2c" stroke-opacity="0.22" stroke-width="0.9"/><rect x="647.2" y="259.2" width="11.3" height="9.3" fill="#7a5238" fill-opacity="0.24" stroke="#6a4a2c" stroke-opacity="0.22" stroke-width="0.9"/><rect x="659.5" y="259.2" width="11.3" height="9.3" fill="#7a5238" fill-opacity="0.00" stroke="#6a4a2c" stroke-opacity="0.22" stroke-width="0.9"/><rect x="671.8" y="259.2" width="11.3" height="9.3" fill="#ffe8c0" fill-opacity="0.15" stroke="#6a4a2c" stroke-opacity="0.22" stroke-width="0.9"/><rect x="684.1" y="259.2" width="23.6" height="9.3" fill="#7a5238" fill-opacity="0.18" stroke="#6a4a2c" stroke-opacity="0.22" stroke-width="0.9"/><rect x="708.7" y="259.2" width="23.6" height="9.3" fill="#ffe8c0" fill-opacity="0.08" stroke="#6a4a2c" stroke-opacity="0.22" stroke-width="0.9"/><rect x="303.1" y="269.5" width="23.6" height="9.3" fill="#fff0d0" fill-opacity="0.24" stroke="#6a4a2c" stroke-opacity="0.22" stroke-width="0.9"/><rect x="327.7" y="269.5" width="11.3" height="9.3" fill="#ffe8c0" fill-opacity="0.07" stroke="#6a4a2c" stroke-opacity="0.22" stroke-width="0.9"/><rect x="340.0" y="269.5" width="23.6" height="9.3" fill="#fff0d0" fill-opacity="0.00" stroke="#6a4a2c" stroke-opacity="0.22" stroke-width="0.9"/><rect x="364.6" y="269.5" width="23.6" height="9.3" fill="#7a5238" fill-opacity="0.13" stroke="#6a4a2c" stroke-opacity="0.22" stroke-width="0.9"/><rect x="389.2" y="269.5" width="23.6" height="9.3" fill="#8a5a38" fill-opacity="0.08" stroke="#6a4a2c" stroke-opacity="0.22" stroke-width="0.9"/><rect x="413.8" y="269.5" width="23.6" height="9.3" fill="#8a5a38" fill-opacity="0.10" stroke="#6a4a2c" stroke-opacity="0.22" stroke-width="0.9"/><rect x="438.4" y="269.5" width="23.6" height="9.3" fill="#7a5238" fill-opacity="0.09" stroke="#6a4a2c" stroke-opacity="0.22" stroke-width="0.9"/><rect x="463.0" y="269.5" width="23.6" height="9.3" fill="#7a5238" fill-opacity="0.00" stroke="#6a4a2c" stroke-opacity="0.22" stroke-width="0.9"/><rect x="487.6" y="269.5" width="23.6" height="9.3" fill="#fff4dc" fill-opacity="0.12" stroke="#6a4a2c" stroke-opacity="0.22" stroke-width="0.9"/><rect x="512.2" y="269.5" width="23.6" height="9.3" fill="#ffe8c0" fill-opacity="0.16" stroke="#6a4a2c" stroke-opacity="0.22" stroke-width="0.9"/><rect x="536.8" y="269.5" width="23.6" height="9.3" fill="#c87a48" fill-opacity="0.00" stroke="#6a4a2c" stroke-opacity="0.22" stroke-width="0.9"/><rect x="561.4" y="269.5" width="11.3" height="9.3" fill="#8a5a38" fill-opacity="0.09" stroke="#6a4a2c" stroke-opacity="0.22" stroke-width="0.9"/><rect x="573.7" y="269.5" width="23.6" height="9.3" fill="#c87a48" fill-opacity="0.29" stroke="#6a4a2c" stroke-opacity="0.22" stroke-width="0.9"/><rect x="598.3" y="269.5" width="11.3" height="9.3" fill="#fff0d0" fill-opacity="0.12" stroke="#6a4a2c" stroke-opacity="0.22" stroke-width="0.9"/><rect x="610.6" y="269.5" width="23.6" height="9.3" fill="#c88a58" fill-opacity="0.24" stroke="#6a4a2c" stroke-opacity="0.22" stroke-width="0.9"/><rect x="635.2" y="269.5" width="23.6" height="9.3" fill="#c87a48" fill-opacity="0.20" stroke="#6a4a2c" stroke-opacity="0.22" stroke-width="0.9"/><rect x="659.8" y="269.5" width="23.6" height="9.3" fill="#fff0d0" fill-opacity="0.17" stroke="#6a4a2c" stroke-opacity="0.22" stroke-width="0.9"/><rect x="684.4" y="269.5" width="23.6" height="9.3" fill="#fff0d0" fill-opacity="0.13" stroke="#6a4a2c" stroke-opacity="0.22" stroke-width="0.9"/><rect x="709.0" y="269.5" width="23.6" height="9.3" fill="#c87a48" fill-opacity="0.24" stroke="#6a4a2c" stroke-opacity="0.22" stroke-width="0.9"/><rect x="290.9" y="279.8" width="23.6" height="9.3" fill="#c88a58" fill-opacity="0.16" stroke="#6a4a2c" stroke-opacity="0.22" stroke-width="0.9"/><rect x="315.5" y="279.8" width="23.6" height="9.3" fill="#ffe8c0" fill-opacity="0.00" stroke="#6a4a2c" stroke-opacity="0.22" stroke-width="0.9"/><rect x="340.1" y="279.8" width="11.3" height="9.3" fill="#fff0d0" fill-opacity="0.07" stroke="#6a4a2c" stroke-opacity="0.22" stroke-width="0.9"/><rect x="352.4" y="279.8" width="23.6" height="9.3" fill="#8a5a38" fill-opacity="0.09" stroke="#6a4a2c" stroke-opacity="0.22" stroke-width="0.9"/><rect x="377.0" y="279.8" width="23.6" height="9.3" fill="#c88a58" fill-opacity="0.20" stroke="#6a4a2c" stroke-opacity="0.22" stroke-width="0.9"/><rect x="401.6" y="279.8" width="23.6" height="9.3" fill="#c87a48" fill-opacity="0.21" stroke="#6a4a2c" stroke-opacity="0.22" stroke-width="0.9"/><rect x="426.2" y="279.8" width="11.3" height="9.3" fill="#fff0d0" fill-opacity="0.28" stroke="#6a4a2c" stroke-opacity="0.22" stroke-width="0.9"/><rect x="438.5" y="279.8" width="23.6" height="9.3" fill="#7a5238" fill-opacity="0.08" stroke="#6a4a2c" stroke-opacity="0.22" stroke-width="0.9"/><rect x="463.1" y="279.8" width="23.6" height="9.3" fill="#8a5a38" fill-opacity="0.16" stroke="#6a4a2c" stroke-opacity="0.22" stroke-width="0.9"/><rect x="487.7" y="279.8" width="23.6" height="9.3" fill="#fff0d0" fill-opacity="0.00" stroke="#6a4a2c" stroke-opacity="0.22" stroke-width="0.9"/><rect x="512.3" y="279.8" width="23.6" height="9.3" fill="#c87a48" fill-opacity="0.00" stroke="#6a4a2c" stroke-opacity="0.22" stroke-width="0.9"/><rect x="536.9" y="279.8" width="23.6" height="9.3" fill="#7a5238" fill-opacity="0.20" stroke="#6a4a2c" stroke-opacity="0.22" stroke-width="0.9"/><rect x="561.5" y="279.8" width="23.6" height="9.3" fill="#8a5a38" fill-opacity="0.10" stroke="#6a4a2c" stroke-opacity="0.22" stroke-width="0.9"/><rect x="586.1" y="279.8" width="23.6" height="9.3" fill="#fff4dc" fill-opacity="0.07" stroke="#6a4a2c" stroke-opacity="0.22" stroke-width="0.9"/><rect x="610.7" y="279.8" width="23.6" height="9.3" fill="#fff0d0" fill-opacity="0.28" stroke="#6a4a2c" stroke-opacity="0.22" stroke-width="0.9"/><rect x="635.3" y="279.8" width="23.6" height="9.3" fill="#fff4dc" fill-opacity="0.22" stroke="#6a4a2c" stroke-opacity="0.22" stroke-width="0.9"/><rect x="659.9" y="279.8" width="23.6" height="9.3" fill="#8a5a38" fill-opacity="0.18" stroke="#6a4a2c" stroke-opacity="0.22" stroke-width="0.9"/><rect x="684.5" y="279.8" width="23.6" height="9.3" fill="#c88a58" fill-opacity="0.26" stroke="#6a4a2c" stroke-opacity="0.22" stroke-width="0.9"/><rect x="709.1" y="279.8" width="23.6" height="9.3" fill="#fff0d0" fill-opacity="0.13" stroke="#6a4a2c" stroke-opacity="0.22" stroke-width="0.9"/><rect x="300.4" y="290.1" width="23.6" height="9.3" fill="#fff4dc" fill-opacity="0.06" stroke="#6a4a2c" stroke-opacity="0.22" stroke-width="0.9"/><rect x="325.0" y="290.1" width="11.3" height="9.3" fill="#7a5238" fill-opacity="0.08" stroke="#6a4a2c" stroke-opacity="0.22" stroke-width="0.9"/><rect x="337.3" y="290.1" width="23.6" height="9.3" fill="#8a5a38" fill-opacity="0.30" stroke="#6a4a2c" stroke-opacity="0.22" stroke-width="0.9"/><rect x="361.9" y="290.1" width="23.6" height="9.3" fill="#fff0d0" fill-opacity="0.09" stroke="#6a4a2c" stroke-opacity="0.22" stroke-width="0.9"/><rect x="386.5" y="290.1" width="23.6" height="9.3" fill="#8a5a38" fill-opacity="0.00" stroke="#6a4a2c" stroke-opacity="0.22" stroke-width="0.9"/><rect x="411.1" y="290.1" width="23.6" height="9.3" fill="#fff4dc" fill-opacity="0.22" stroke="#6a4a2c" stroke-opacity="0.22" stroke-width="0.9"/><rect x="435.7" y="290.1" width="23.6" height="9.3" fill="#fff4dc" fill-opacity="0.29" stroke="#6a4a2c" stroke-opacity="0.22" stroke-width="0.9"/><rect x="460.3" y="290.1" width="23.6" height="9.3" fill="#8a5a38" fill-opacity="0.08" stroke="#6a4a2c" stroke-opacity="0.22" stroke-width="0.9"/><rect x="484.9" y="290.1" width="23.6" height="9.3" fill="#8a5a38" fill-opacity="0.28" stroke="#6a4a2c" stroke-opacity="0.22" stroke-width="0.9"/><rect x="509.5" y="290.1" width="23.6" height="9.3" fill="#ffe8c0" fill-opacity="0.24" stroke="#6a4a2c" stroke-opacity="0.22" stroke-width="0.9"/><rect x="534.1" y="290.1" width="23.6" height="9.3" fill="#c88a58" fill-opacity="0.14" stroke="#6a4a2c" stroke-opacity="0.22" stroke-width="0.9"/><rect x="558.7" y="290.1" width="23.6" height="9.3" fill="#fff4dc" fill-opacity="0.17" stroke="#6a4a2c" stroke-opacity="0.22" stroke-width="0.9"/><rect x="583.3" y="290.1" width="23.6" height="9.3" fill="#fff0d0" fill-opacity="0.16" stroke="#6a4a2c" stroke-opacity="0.22" stroke-width="0.9"/><rect x="607.9" y="290.1" width="23.6" height="9.3" fill="#8a5a38" fill-opacity="0.25" stroke="#6a4a2c" stroke-opacity="0.22" stroke-width="0.9"/><rect x="632.5" y="290.1" width="11.3" height="9.3" fill="#fff0d0" fill-opacity="0.20" stroke="#6a4a2c" stroke-opacity="0.22" stroke-width="0.9"/><rect x="644.8" y="290.1" width="23.6" height="9.3" fill="#fff0d0" fill-opacity="0.09" stroke="#6a4a2c" stroke-opacity="0.22" stroke-width="0.9"/><rect x="669.4" y="290.1" width="23.6" height="9.3" fill="#c87a48" fill-opacity="0.00" stroke="#6a4a2c" stroke-opacity="0.22" stroke-width="0.9"/><rect x="694.0" y="290.1" width="23.6" height="9.3" fill="#fff0d0" fill-opacity="0.07" stroke="#6a4a2c" stroke-opacity="0.22" stroke-width="0.9"/><rect x="718.6" y="290.1" width="23.6" height="9.3" fill="#fff0d0" fill-opacity="0.23" stroke="#6a4a2c" stroke-opacity="0.22" stroke-width="0.9"/><rect x="290.8" y="300.4" width="23.6" height="9.3" fill="#c87a48" fill-opacity="0.00" stroke="#6a4a2c" stroke-opacity="0.22" stroke-width="0.9"/><rect x="315.4" y="300.4" width="23.6" height="9.3" fill="#fff4dc" fill-opacity="0.00" stroke="#6a4a2c" stroke-opacity="0.22" stroke-width="0.9"/><rect x="340.0" y="300.4" width="23.6" height="9.3" fill="#c88a58" fill-opacity="0.09" stroke="#6a4a2c" stroke-opacity="0.22" stroke-width="0.9"/><rect x="364.6" y="300.4" width="23.6" height="9.3" fill="#fff0d0" fill-opacity="0.07" stroke="#6a4a2c" stroke-opacity="0.22" stroke-width="0.9"/><rect x="389.2" y="300.4" width="23.6" height="9.3" fill="#8a5a38" fill-opacity="0.17" stroke="#6a4a2c" stroke-opacity="0.22" stroke-width="0.9"/><rect x="413.8" y="300.4" width="23.6" height="9.3" fill="#8a5a38" fill-opacity="0.13" stroke="#6a4a2c" stroke-opacity="0.22" stroke-width="0.9"/><rect x="438.4" y="300.4" width="23.6" height="9.3" fill="#fff0d0" fill-opacity="0.14" stroke="#6a4a2c" stroke-opacity="0.22" stroke-width="0.9"/><rect x="463.0" y="300.4" width="23.6" height="9.3" fill="#c87a48" fill-opacity="0.28" stroke="#6a4a2c" stroke-opacity="0.22" stroke-width="0.9"/><rect x="487.6" y="300.4" width="23.6" height="9.3" fill="#8a5a38" fill-opacity="0.21" stroke="#6a4a2c" stroke-opacity="0.22" stroke-width="0.9"/><rect x="512.2" y="300.4" width="23.6" height="9.3" fill="#fff0d0" fill-opacity="0.16" stroke="#6a4a2c" stroke-opacity="0.22" stroke-width="0.9"/><rect x="536.8" y="300.4" width="23.6" height="9.3" fill="#fff0d0" fill-opacity="0.19" stroke="#6a4a2c" stroke-opacity="0.22" stroke-width="0.9"/><rect x="561.4" y="300.4" width="23.6" height="9.3" fill="#fff0d0" fill-opacity="0.20" stroke="#6a4a2c" stroke-opacity="0.22" stroke-width="0.9"/><rect x="586.0" y="300.4" width="23.6" height="9.3" fill="#fff0d0" fill-opacity="0.19" stroke="#6a4a2c" stroke-opacity="0.22" stroke-width="0.9"/><rect x="610.6" y="300.4" width="23.6" height="9.3" fill="#fff0d0" fill-opacity="0.06" stroke="#6a4a2c" stroke-opacity="0.22" stroke-width="0.9"/><rect x="635.2" y="300.4" width="11.3" height="9.3" fill="#ffe8c0" fill-opacity="0.29" stroke="#6a4a2c" stroke-opacity="0.22" stroke-width="0.9"/><rect x="647.5" y="300.4" width="23.6" height="9.3" fill="#fff4dc" fill-opacity="0.12" stroke="#6a4a2c" stroke-opacity="0.22" stroke-width="0.9"/><rect x="672.1" y="300.4" width="23.6" height="9.3" fill="#8a5a38" fill-opacity="0.29" stroke="#6a4a2c" stroke-opacity="0.22" stroke-width="0.9"/><rect x="696.7" y="300.4" width="23.6" height="9.3" fill="#fff0d0" fill-opacity="0.29" stroke="#6a4a2c" stroke-opacity="0.22" stroke-width="0.9"/><rect x="721.3" y="300.4" width="23.6" height="9.3" fill="#fff4dc" fill-opacity="0.25" stroke="#6a4a2c" stroke-opacity="0.22" stroke-width="0.9"/><rect x="302.7" y="310.7" width="23.6" height="9.3" fill="#c88a58" fill-opacity="0.27" stroke="#6a4a2c" stroke-opacity="0.22" stroke-width="0.9"/><rect x="327.3" y="310.7" width="23.6" height="9.3" fill="#fff0d0" fill-opacity="0.15" stroke="#6a4a2c" stroke-opacity="0.22" stroke-width="0.9"/><rect x="351.9" y="310.7" width="23.6" height="9.3" fill="#fff4dc" fill-opacity="0.18" stroke="#6a4a2c" stroke-opacity="0.22" stroke-width="0.9"/><rect x="376.5" y="310.7" width="11.3" height="9.3" fill="#8a5a38" fill-opacity="0.00" stroke="#6a4a2c" stroke-opacity="0.22" stroke-width="0.9"/><rect x="388.8" y="310.7" width="11.3" height="9.3" fill="#fff0d0" fill-opacity="0.14" stroke="#6a4a2c" stroke-opacity="0.22" stroke-width="0.9"/><rect x="401.1" y="310.7" width="23.6" height="9.3" fill="#7a5238" fill-opacity="0.22" stroke="#6a4a2c" stroke-opacity="0.22" stroke-width="0.9"/><rect x="425.7" y="310.7" width="23.6" height="9.3" fill="#7a5238" fill-opacity="0.17" stroke="#6a4a2c" stroke-opacity="0.22" stroke-width="0.9"/><rect x="450.3" y="310.7" width="23.6" height="9.3" fill="#ffe8c0" fill-opacity="0.14" stroke="#6a4a2c" stroke-opacity="0.22" stroke-width="0.9"/><rect x="474.9" y="310.7" width="23.6" height="9.3" fill="#8a5a38" fill-opacity="0.00" stroke="#6a4a2c" stroke-opacity="0.22" stroke-width="0.9"/><rect x="499.5" y="310.7" width="23.6" height="9.3" fill="#8a5a38" fill-opacity="0.24" stroke="#6a4a2c" stroke-opacity="0.22" stroke-width="0.9"/><rect x="524.1" y="310.7" width="23.6" height="9.3" fill="#ffe8c0" fill-opacity="0.29" stroke="#6a4a2c" stroke-opacity="0.22" stroke-width="0.9"/><rect x="548.7" y="310.7" width="23.6" height="9.3" fill="#fff4dc" fill-opacity="0.14" stroke="#6a4a2c" stroke-opacity="0.22" stroke-width="0.9"/><rect x="573.3" y="310.7" width="23.6" height="9.3" fill="#8a5a38" fill-opacity="0.12" stroke="#6a4a2c" stroke-opacity="0.22" stroke-width="0.9"/><rect x="597.9" y="310.7" width="23.6" height="9.3" fill="#ffe8c0" fill-opacity="0.00" stroke="#6a4a2c" stroke-opacity="0.22" stroke-width="0.9"/><rect x="622.5" y="310.7" width="23.6" height="9.3" fill="#c88a58" fill-opacity="0.10" stroke="#6a4a2c" stroke-opacity="0.22" stroke-width="0.9"/><rect x="647.1" y="310.7" width="23.6" height="9.3" fill="#8a5a38" fill-opacity="0.16" stroke="#6a4a2c" stroke-opacity="0.22" stroke-width="0.9"/><rect x="671.7" y="310.7" width="23.6" height="9.3" fill="#fff0d0" fill-opacity="0.13" stroke="#6a4a2c" stroke-opacity="0.22" stroke-width="0.9"/><rect x="696.3" y="310.7" width="11.3" height="9.3" fill="#fff0d0" fill-opacity="0.16" stroke="#6a4a2c" stroke-opacity="0.22" stroke-width="0.9"/><rect x="708.6" y="310.7" width="11.3" height="9.3" fill="#fff4dc" fill-opacity="0.30" stroke="#6a4a2c" stroke-opacity="0.22" stroke-width="0.9"/><rect x="720.9" y="310.7" width="23.6" height="9.3" fill="#ffe8c0" fill-opacity="0.12" stroke="#6a4a2c" stroke-opacity="0.22" stroke-width="0.9"/><rect x="290.9" y="321.0" width="23.6" height="9.3" fill="#c88a58" fill-opacity="0.23" stroke="#6a4a2c" stroke-opacity="0.22" stroke-width="0.9"/><rect x="315.5" y="321.0" width="23.6" height="9.3" fill="#c88a58" fill-opacity="0.26" stroke="#6a4a2c" stroke-opacity="0.22" stroke-width="0.9"/><rect x="340.1" y="321.0" width="23.6" height="9.3" fill="#8a5a38" fill-opacity="0.22" stroke="#6a4a2c" stroke-opacity="0.22" stroke-width="0.9"/><rect x="364.7" y="321.0" width="23.6" height="9.3" fill="#c88a58" fill-opacity="0.14" stroke="#6a4a2c" stroke-opacity="0.22" stroke-width="0.9"/><rect x="389.3" y="321.0" width="23.6" height="9.3" fill="#c88a58" fill-opacity="0.12" stroke="#6a4a2c" stroke-opacity="0.22" stroke-width="0.9"/><rect x="413.9" y="321.0" width="11.3" height="9.3" fill="#ffe8c0" fill-opacity="0.12" stroke="#6a4a2c" stroke-opacity="0.22" stroke-width="0.9"/><rect x="426.2" y="321.0" width="11.3" height="9.3" fill="#fff0d0" fill-opacity="0.21" stroke="#6a4a2c" stroke-opacity="0.22" stroke-width="0.9"/><rect x="438.5" y="321.0" width="11.3" height="9.3" fill="#ffe8c0" fill-opacity="0.27" stroke="#6a4a2c" stroke-opacity="0.22" stroke-width="0.9"/><rect x="450.8" y="321.0" width="23.6" height="9.3" fill="#c88a58" fill-opacity="0.26" stroke="#6a4a2c" stroke-opacity="0.22" stroke-width="0.9"/><rect x="475.4" y="321.0" width="23.6" height="9.3" fill="#fff4dc" fill-opacity="0.11" stroke="#6a4a2c" stroke-opacity="0.22" stroke-width="0.9"/><rect x="500.0" y="321.0" width="23.6" height="9.3" fill="#8a5a38" fill-opacity="0.18" stroke="#6a4a2c" stroke-opacity="0.22" stroke-width="0.9"/><rect x="524.6" y="321.0" width="23.6" height="9.3" fill="#7a5238" fill-opacity="0.00" stroke="#6a4a2c" stroke-opacity="0.22" stroke-width="0.9"/><rect x="549.2" y="321.0" width="23.6" height="9.3" fill="#7a5238" fill-opacity="0.18" stroke="#6a4a2c" stroke-opacity="0.22" stroke-width="0.9"/><rect x="573.8" y="321.0" width="23.6" height="9.3" fill="#c87a48" fill-opacity="0.19" stroke="#6a4a2c" stroke-opacity="0.22" stroke-width="0.9"/><rect x="598.4" y="321.0" width="11.3" height="9.3" fill="#7a5238" fill-opacity="0.11" stroke="#6a4a2c" stroke-opacity="0.22" stroke-width="0.9"/><rect x="610.7" y="321.0" width="23.6" height="9.3" fill="#fff4dc" fill-opacity="0.24" stroke="#6a4a2c" stroke-opacity="0.22" stroke-width="0.9"/><rect x="635.3" y="321.0" width="23.6" height="9.3" fill="#c87a48" fill-opacity="0.21" stroke="#6a4a2c" stroke-opacity="0.22" stroke-width="0.9"/><rect x="659.9" y="321.0" width="23.6" height="9.3" fill="#c88a58" fill-opacity="0.07" stroke="#6a4a2c" stroke-opacity="0.22" stroke-width="0.9"/><rect x="684.5" y="321.0" width="23.6" height="9.3" fill="#c88a58" fill-opacity="0.21" stroke="#6a4a2c" stroke-opacity="0.22" stroke-width="0.9"/><rect x="709.1" y="321.0" width="23.6" height="9.3" fill="#8a5a38" fill-opacity="0.09" stroke="#6a4a2c" stroke-opacity="0.22" stroke-width="0.9"/><rect x="301.4" y="331.3" width="11.3" height="9.3" fill="#fff4dc" fill-opacity="0.00" stroke="#6a4a2c" stroke-opacity="0.22" stroke-width="0.9"/><rect x="313.7" y="331.3" width="23.6" height="9.3" fill="#c88a58" fill-opacity="0.00" stroke="#6a4a2c" stroke-opacity="0.22" stroke-width="0.9"/><rect x="338.3" y="331.3" width="11.3" height="9.3" fill="#ffe8c0" fill-opacity="0.28" stroke="#6a4a2c" stroke-opacity="0.22" stroke-width="0.9"/><rect x="350.6" y="331.3" width="23.6" height="9.3" fill="#8a5a38" fill-opacity="0.00" stroke="#6a4a2c" stroke-opacity="0.22" stroke-width="0.9"/><rect x="375.2" y="331.3" width="11.3" height="9.3" fill="#8a5a38" fill-opacity="0.26" stroke="#6a4a2c" stroke-opacity="0.22" stroke-width="0.9"/><rect x="387.5" y="331.3" width="23.6" height="9.3" fill="#c88a58" fill-opacity="0.17" stroke="#6a4a2c" stroke-opacity="0.22" stroke-width="0.9"/><rect x="412.1" y="331.3" width="23.6" height="9.3" fill="#ffe8c0" fill-opacity="0.25" stroke="#6a4a2c" stroke-opacity="0.22" stroke-width="0.9"/><rect x="436.7" y="331.3" width="11.3" height="9.3" fill="#8a5a38" fill-opacity="0.12" stroke="#6a4a2c" stroke-opacity="0.22" stroke-width="0.9"/><rect x="449.0" y="331.3" width="11.3" height="9.3" fill="#c88a58" fill-opacity="0.22" stroke="#6a4a2c" stroke-opacity="0.22" stroke-width="0.9"/><rect x="461.3" y="331.3" width="11.3" height="9.3" fill="#8a5a38" fill-opacity="0.15" stroke="#6a4a2c" stroke-opacity="0.22" stroke-width="0.9"/><rect x="473.6" y="331.3" width="23.6" height="9.3" fill="#7a5238" fill-opacity="0.18" stroke="#6a4a2c" stroke-opacity="0.22" stroke-width="0.9"/><rect x="498.2" y="331.3" width="23.6" height="9.3" fill="#c87a48" fill-opacity="0.10" stroke="#6a4a2c" stroke-opacity="0.22" stroke-width="0.9"/><rect x="522.8" y="331.3" width="23.6" height="9.3" fill="#fff0d0" fill-opacity="0.00" stroke="#6a4a2c" stroke-opacity="0.22" stroke-width="0.9"/><rect x="547.4" y="331.3" width="23.6" height="9.3" fill="#c87a48" fill-opacity="0.00" stroke="#6a4a2c" stroke-opacity="0.22" stroke-width="0.9"/><rect x="572.0" y="331.3" width="23.6" height="9.3" fill="#c87a48" fill-opacity="0.21" stroke="#6a4a2c" stroke-opacity="0.22" stroke-width="0.9"/><rect x="596.6" y="331.3" width="23.6" height="9.3" fill="#8a5a38" fill-opacity="0.29" stroke="#6a4a2c" stroke-opacity="0.22" stroke-width="0.9"/><rect x="621.2" y="331.3" width="23.6" height="9.3" fill="#fff0d0" fill-opacity="0.20" stroke="#6a4a2c" stroke-opacity="0.22" stroke-width="0.9"/><rect x="645.8" y="331.3" width="23.6" height="9.3" fill="#7a5238" fill-opacity="0.14" stroke="#6a4a2c" stroke-opacity="0.22" stroke-width="0.9"/><rect x="670.4" y="331.3" width="23.6" height="9.3" fill="#c88a58" fill-opacity="0.25" stroke="#6a4a2c" stroke-opacity="0.22" stroke-width="0.9"/><rect x="695.0" y="331.3" width="23.6" height="9.3" fill="#fff0d0" fill-opacity="0.22" stroke="#6a4a2c" stroke-opacity="0.22" stroke-width="0.9"/><rect x="719.6" y="331.3" width="23.6" height="9.3" fill="#8a5a38" fill-opacity="0.11" stroke="#6a4a2c" stroke-opacity="0.22" stroke-width="0.9"/><rect x="290.7" y="341.6" width="23.6" height="9.3" fill="#7a5238" fill-opacity="0.22" stroke="#6a4a2c" stroke-opacity="0.22" stroke-width="0.9"/><rect x="315.3" y="341.6" width="23.6" height="9.3" fill="#8a5a38" fill-opacity="0.16" stroke="#6a4a2c" stroke-opacity="0.22" stroke-width="0.9"/><rect x="339.9" y="341.6" width="23.6" height="9.3" fill="#fff4dc" fill-opacity="0.07" stroke="#6a4a2c" stroke-opacity="0.22" stroke-width="0.9"/><rect x="364.5" y="341.6" width="11.3" height="9.3" fill="#7a5238" fill-opacity="0.00" stroke="#6a4a2c" stroke-opacity="0.22" stroke-width="0.9"/><rect x="376.8" y="341.6" width="23.6" height="9.3" fill="#fff4dc" fill-opacity="0.20" stroke="#6a4a2c" stroke-opacity="0.22" stroke-width="0.9"/><rect x="401.4" y="341.6" width="23.6" height="9.3" fill="#c87a48" fill-opacity="0.17" stroke="#6a4a2c" stroke-opacity="0.22" stroke-width="0.9"/><rect x="426.0" y="341.6" width="23.6" height="9.3" fill="#8a5a38" fill-opacity="0.26" stroke="#6a4a2c" stroke-opacity="0.22" stroke-width="0.9"/><rect x="450.6" y="341.6" width="23.6" height="9.3" fill="#fff0d0" fill-opacity="0.10" stroke="#6a4a2c" stroke-opacity="0.22" stroke-width="0.9"/><rect x="475.2" y="341.6" width="23.6" height="9.3" fill="#fff0d0" fill-opacity="0.06" stroke="#6a4a2c" stroke-opacity="0.22" stroke-width="0.9"/><rect x="499.8" y="341.6" width="23.6" height="9.3" fill="#c87a48" fill-opacity="0.25" stroke="#6a4a2c" stroke-opacity="0.22" stroke-width="0.9"/><rect x="524.4" y="341.6" width="23.6" height="9.3" fill="#7a5238" fill-opacity="0.24" stroke="#6a4a2c" stroke-opacity="0.22" stroke-width="0.9"/><rect x="549.0" y="341.6" width="23.6" height="9.3" fill="#c88a58" fill-opacity="0.21" stroke="#6a4a2c" stroke-opacity="0.22" stroke-width="0.9"/><rect x="573.6" y="341.6" width="23.6" height="9.3" fill="#c87a48" fill-opacity="0.14" stroke="#6a4a2c" stroke-opacity="0.22" stroke-width="0.9"/><rect x="598.2" y="341.6" width="23.6" height="9.3" fill="#8a5a38" fill-opacity="0.13" stroke="#6a4a2c" stroke-opacity="0.22" stroke-width="0.9"/><rect x="622.8" y="341.6" width="23.6" height="9.3" fill="#fff4dc" fill-opacity="0.07" stroke="#6a4a2c" stroke-opacity="0.22" stroke-width="0.9"/><rect x="647.4" y="341.6" width="23.6" height="9.3" fill="#7a5238" fill-opacity="0.16" stroke="#6a4a2c" stroke-opacity="0.22" stroke-width="0.9"/><rect x="672.0" y="341.6" width="23.6" height="9.3" fill="#fff4dc" fill-opacity="0.00" stroke="#6a4a2c" stroke-opacity="0.22" stroke-width="0.9"/><rect x="696.6" y="341.6" width="23.6" height="9.3" fill="#7a5238" fill-opacity="0.00" stroke="#6a4a2c" stroke-opacity="0.22" stroke-width="0.9"/><rect x="721.2" y="341.6" width="23.6" height="9.3" fill="#c87a48" fill-opacity="0.23" stroke="#6a4a2c" stroke-opacity="0.22" stroke-width="0.9"/></g><g filter="url(#b05)"><rect x="329.4" y="161.2" width="25" height="7" rx="0.8" fill="#7a5a40" opacity="0.9"/><rect x="342.7" y="170.4" width="24.6" height="6.8" rx="0.8" fill="#4a3f38" opacity="0.95"/><rect x="415.3" y="136.3" width="27" height="7" rx="0.8" fill="#8a6e52" opacity="0.85"/><rect x="445.2" y="170.4" width="24" height="6.8" rx="0.8" fill="#6a5848" opacity="0.85"/><rect x="355.7" y="198" width="25" height="7.5" rx="0.8" fill="#5e4638" opacity="0.9"/><rect x="368.7" y="207" width="24.5" height="7.6" rx="0.8" fill="#6a4030" opacity="0.9"/><rect x="470.7" y="153" width="20" height="7" rx="0.8" fill="#5a4536" opacity="0.8"/><rect x="393" y="151.5" width="50" height="8" rx="0.8" fill="#d09a6a" opacity="0.6"/><rect x="330.8" y="226" width="48" height="6.5" rx="0.8" fill="#d09060" opacity="0.7"/><rect x="357.5" y="259.6" width="27.5" height="7" rx="0.8" fill="#9a6a4a" opacity="0.8"/><rect x="364.7" y="278.3" width="42" height="7.2" rx="0.8" fill="#c08058" opacity="0.7"/><rect x="318.6" y="288.4" width="23" height="6" rx="0.8" fill="#8a5a40" opacity="0.8"/><rect x="408" y="295" width="24.5" height="7" rx="0.8" fill="#8a5040" opacity="0.8"/><rect x="396.4" y="243.7" width="22" height="6" rx="0.8" fill="#8a7058" opacity="0.7"/><rect x="470" y="287" width="26" height="7" rx="0.8" fill="#c89068" opacity="0.7"/><rect x="482.9" y="261" width="24.5" height="7" rx="0.8" fill="#ece4d4" opacity="0.9"/><rect x="624.7" y="136.6" width="20.5" height="6" rx="0.8" fill="#6a5040" opacity="0.85"/><rect x="619" y="145.6" width="18" height="6" rx="0.8" fill="#45454f" opacity="0.95"/><rect x="630.5" y="171" width="17.5" height="6.6" rx="0.8" fill="#6a5040" opacity="0.85"/><rect x="530.6" y="189.5" width="13" height="5.5" rx="0.8" fill="#3a3a40" opacity="0.9"/><rect x="546.6" y="189.5" width="13.5" height="5.5" rx="0.8" fill="#c07050" opacity="0.8"/><rect x="649.7" y="225.3" width="72" height="6.7" rx="0.8" fill="#5a4538" opacity="0.85"/><rect x="694" y="286" width="19" height="4.8" rx="0.8" fill="#3a3030" opacity="0.8"/><rect x="569" y="304" width="13" height="6.5" rx="0.8" fill="#e8e0d4" opacity="0.9"/><rect x="582" y="304" width="13" height="6.5" rx="0.8" fill="#2a2626" opacity="0.9"/><rect x="521.6" y="311.5" width="18.5" height="7" rx="0.8" fill="#3a3030" opacity="0.85"/><rect x="690" y="160" width="24" height="7" rx="0.8" fill="#6e4a36" opacity="0.7"/><rect x="684" y="200" width="32" height="7.5" rx="0.8" fill="#6e4a36" opacity="0.75"/><rect x="660" y="250" width="24" height="7" rx="0.8" fill="#7a5540" opacity="0.6"/><rect x="700" y="120" width="25" height="7" rx="0.8" fill="#6e4a36" opacity="0.6"/><rect x="655" y="300" width="24" height="7" rx="0.8" fill="#7a5540" opacity="0.5"/><rect x="596" y="330" width="20" height="5" rx="0.8" fill="#3a3030" opacity="0.5"/><rect x="326" y="140" width="26" height="7" rx="0.8" fill="#9a7450" opacity="0.5"/><rect x="380" y="125" width="24" height="7" rx="0.8" fill="#b98a5c" opacity="0.5"/><rect x="640" y="190" width="22" height="7" rx="0.8" fill="#b07850" opacity="0.6"/><rect x="668" y="270" width="25" height="7" rx="0.8" fill="#b07850" opacity="0.5"/></g><g filter="url(#b2)"><ellipse cx="470" cy="205" rx="30" ry="34" fill="#e2cea6" opacity="0.55"/><ellipse cx="455" cy="240" rx="25" ry="18" fill="#e0caa2" opacity="0.45"/><ellipse cx="500" cy="245" rx="30" ry="12" fill="#e0c9a2" opacity="0.4"/><ellipse cx="520" cy="300" rx="40" ry="14" fill="#d8bc92" opacity="0.3"/></g><g filter="url(#rg)"><path d="M440 175l48-17 29-14 3 86-32 22-33-5-18-38z" fill="#e2cea6" opacity="0.38"/><path d="M474 180l43-14 2 64-28 20-14-10z" fill="#e6d4ae" opacity="0.45"/><path d="M482 117h35v49l-21 2-11-24z" fill="#e6d8bc" opacity="0.9"/><path d="M517 117h96l-23 27-22 27-27 16-16 33-8 10z" fill="#dccdb0" opacity="0.92"/></g><g filter="url(#rg2)"><path d="M549 124l28-3 6 14-10 26-12 2-6-18z" fill="#6e3f2a" opacity="0.95"/><path d="M520 148l12-4 5 18-6 22 2 22-10 0z" fill="#75452e" opacity="0.9"/><path d="M522 206l10 0 2 16-10 4z" fill="#6e412c" opacity="0.85"/><path d="M585 122l14 0-8 16-6 2z" fill="#7e5036" opacity="0.8"/><path d="M538 160l12-2 2 8-12 4z" fill="#84553a" opacity="0.75"/><path d="M558 168l8-4 2 8-8 6z" fill="#7a4a32" opacity="0.7"/></g><g filter="url(#b1)"><path d="M466 158q12 -1 24 -4l-1 5q-12 4 -23 3z" fill="#5a4536" opacity="0.8"/><path d="M492 138q0-6 7-6 5 1 3 8l-5 9q-5-4-5-11z" fill="#3d4450" opacity="0.95"/><path d="M508 132q3-8 8-9l1 9q-4 5-9 3z" fill="#5a6068" opacity="0.9"/><path d="M508 141h8v3l-7 2z" fill="#4a4f5a" opacity="0.9"/><ellipse cx="503" cy="156" rx="4" ry="6" fill="#f2eee8" opacity="0.95"/><path d="M490 164l8-4 2 4-8 5z" fill="#e8a040" opacity="0.9"/><ellipse cx="497" cy="127" rx="7" ry="5" fill="#efe2d6" opacity="0.8"/><ellipse cx="505" cy="212" rx="15" ry="16" fill="#6a5a48" opacity="0.35"/><ellipse cx="506" cy="208" rx="9" ry="8" fill="#ecdcc8" opacity="0.95"/><path d="M506 197q8 0 10 6l-2 5q-4-5-10-7z" fill="#d88858" opacity="0.9"/><path d="M496 216q10 4 20 3l-1 6q-10 2-18-3z" fill="#3a3d45" opacity="0.95"/></g><rect x="516.6" y="117.5" width="1" height="127" fill="#b49a78" opacity="0.6"/><rect x="314" y="117.5" width="412" height="232" filter="url(#nz)" opacity="0.7"/><rect x="314" y="117.5" width="412" height="232" filter="url(#nz2)" opacity="0.45"/><rect x="314" y="117.5" width="412" height="232" fill="url(#vg)"/><rect x="314" y="117.5" width="412" height="232" fill="url(#vig)"/><path d="M400 324q40-3 80 0t90-1" stroke="#d8d0c0" stroke-width="2.500" opacity="0.45" fill="none" filter="url(#b1)"/><rect x="314" y="316" width="412" height="35" fill="url(#fl)"/><g filter="url(#b05)"><path d="M565 249q30 4 63 0l2 42 5 32 0.500 27h-20l-4-30-19.500-42-23 33-9 39h-23l3-45 22-48z" fill="#0d0c0c"/><path d="M582.8 174.2 L569.7 180.4 L543.0 212.0 L545.5 222.0 L558.6 215.1 L579.7 195.0z" fill="#7a4a30"/><path d="M543.0 213.9 L569.7 198.4 L582.2 201.5 L582.8 210.8 L559.5 217.0 L547.1 223.2z" fill="#6e432c"/><path d="M569.7 199.6 L579.7 197.4 L583.4 203.3 L582.2 212.7 L575.9 213.9 L572.2 208.9z" fill="#a0705a"/><path d="M626.9 174.2 L638.0 179.7 L656.7 199.6 L654.8 211.4 L644.9 206.4 L628.7 190.3z" fill="#96684e"/><path d="M656.7 201.2 L654.8 212.7 L643.6 224.5 L633.7 220.7 L645.5 209.6z" fill="#a0745c"/><path d="M630.9 217.0 L641.8 214.5 L649.8 220.7 L648.0 230.7 L638.7 233.8 L630.0 228.2z" fill="#b89080"/><path d="M581.2 173.5 L587.4 171.7 L596.7 195.0 L611.3 199.6 L620.0 184.1 L623.1 171.7 L626.9 174.2 L630.0 215.1 L626.9 249.9 L596.7 252.4 L571.9 247.7 L579.1 201.2z" fill="#a6a8b0"/><path d="M579.1 212.0 L596.7 215.1 L623.1 224.5 L630.0 221.3 L628.1 244.6 L601.4 246.2 L576.6 240.0z" fill="#6a6868" opacity="0.85" filter="url(#b1)"/><path d="M579.7 212.0 L596.7 215.1 L593.6 222.9 L584.3 220.7z" fill="#38383a"/><path d="M603.9 165.5 L617.6 165.5 L620.0 179.4 L611.3 184.1 L603.3 177.9z" fill="#8a5e48"/><path d="M603.3 171.7 L620.7 171.7 L611.3 198.7z" fill="#946850"/><path d="M600.8 140.6 L611.3 136.9 L618.8 143.7 L619.4 156.2 L615.7 165.5 L609.5 169.2 L603.3 165.5 L600.2 153.0z" fill="#b08a72"/><path d="M603.0 129.8 L611.3 128.8 L616.9 134.4 L611.3 136.9 L603.3 141.2 L600.2 153.0 L602.0 168.6 L603.3 181.0 L602.0 196.5 L596.7 206.4 L590.9 199.6 L584.6 179.4 L587.7 159.3 L590.9 140.6z" fill="#15100e"/><path d="M611.3 128.8 L616.9 133.8 L620.0 143.7 L619.4 159.3 L623.1 174.8 L625.6 191.9 L623.1 206.4 L620.0 196.5 L618.2 177.9 L616.9 168.6 L618.8 156.2 L618.2 143.7z" fill="#15100e"/><path d="M599.9 134.4 L607.6 131.3 L602.0 146.8z" fill="#b0a8a0" opacity="0.6"/><path d="M608 148h3M614 148h2.500" stroke="#3a2820" stroke-width="1.200"/><path d="M610 160h5" stroke="#6a3a30" stroke-width="1.200"/></g></g><rect x="314.5" y="118.0" width="411" height="231" fill="none" stroke="#e8e0d4" stroke-width="1"/><rect x="314.5" y="118.0" width="411" height="231" fill="none" stroke="#3a2a20" stroke-width="1" stroke-dasharray="2.400 2.400"/><rect x="311.9" y="115.5" width="4.800" height="4.800" fill="#050505" stroke="#c8c8c8" stroke-width="0.700"/><rect x="311.9" y="231.1" width="4.800" height="4.800" fill="#050505" stroke="#c8c8c8" stroke-width="0.700"/><rect x="311.9" y="346.8" width="4.800" height="4.800" fill="#050505" stroke="#c8c8c8" stroke-width="0.700"/><rect x="517.6" y="115.5" width="4.800" height="4.800" fill="#050505" stroke="#c8c8c8" stroke-width="0.700"/><rect x="517.6" y="346.8" width="4.800" height="4.800" fill="#050505" stroke="#c8c8c8" stroke-width="0.700"/><rect x="722.9" y="115.5" width="4.800" height="4.800" fill="#050505" stroke="#c8c8c8" stroke-width="0.700"/><rect x="722.9" y="231.1" width="4.800" height="4.800" fill="#050505" stroke="#c8c8c8" stroke-width="0.700"/><rect x="722.9" y="346.8" width="4.800" height="4.800" fill="#050505" stroke="#c8c8c8" stroke-width="0.700"/></svg><div style="left:909px;top:107px;width:2.4px;height:344px;background:linear-gradient(90deg,#d6d7de,#c4c6ce 60%,#e4e5ea);"></div><div style="left:911.2px;top:89.7px;width:113px;height:362px;background:#fff;"></div><div style="left:911.2px;top:90px;width:113px;height:14.6px;background:#d3dae4;"></div><div class="t" style="left:914.7px;top:94.15px;font-size:7.25px;line-height:8.70px;color:#3c4450;font-weight:normal;">Properties window</div><svg style="left:1012px;top:93px" width="12" height="9" viewBox="0 0 12 9"><path d="M3 1h2.400v3.500h-2.400zM2.200 4.500h4M4.200 4.500v3" stroke="#555" stroke-width="0.800" fill="none"/><path d="M10.500 2.300l4 4M14.500 2.300l-4 4" stroke="#444" stroke-width="0.900"/></svg><div style="left:911.3px;top:105.2px;width:13.5px;height:13px;background:#c8e1f1;"></div><svg style="left:913px;top:106px" width="30" height="13" viewBox="0 0 30 13"><path d="M3 3.500h1.500M3 6h1.500M3 8.500h1.500" stroke="#4a86c5" stroke-width="1.200"/><path d="M6 3.500h3M6 6h2M6 8.500h3" stroke="#6c7a88" stroke-width="0.800"/><path d="M16.300 6l1.600-4 1.600 4M16.900 4.800h2" stroke="#333" stroke-width="0.800" fill="none"/><path d="M16.600 7.300h2.600l-2.600 3.200h2.600" stroke="#333" stroke-width="0.800" fill="none"/><path d="M21.500 2.500v7M20.300 8l1.200 1.800 1.200-1.800z" stroke="#2a62b0" stroke-width="0.800" fill="#2a62b0"/></svg><div style="left:911.5px;top:120.6px;width:113px;height:331px;background:#fff;border-top:1px solid #c8cad0;border-left:1px solid #d8dae0;"></div><div style="left:137.5px;top:366.7px;width:761px;height:1px;background:#d0d0d6;"></div><div style="left:137.5px;top:367.7px;width:772px;height:19.5px;background:#fff;"></div><div style="left:589px;top:368.2px;width:320px;height:16.4px;background:#d9d8e6;"></div><div style="left:137.6px;top:368.3px;width:146.00000000000003px;height:15.8px;background:#fbfbfd;border:1px solid #c4c6d0;border-radius:2px;"></div><div style="left:286.2px;top:368.3px;width:231.50000000000006px;height:15.8px;background:#fbfbfd;border:1px solid #c4c6d0;border-radius:2px;"></div><div style="left:519.3px;top:368.3px;width:69.90000000000009px;height:15.8px;background:#fbfbfd;border:1px solid #c4c6d0;border-radius:2px;"></div><div style="left:291.6px;top:370px;width:12.7px;height:13.8px;background:#f7dc8a;border:1px solid #e3b84a;border-radius:2px;"></div><svg style="left:136px;top:366px" width="460" height="22" viewBox="136 366 460 22"><rect x="141.1" y="371.8" width="1.100" height="1.100" fill="#7a7a82"/><rect x="141.1" y="374.5" width="1.100" height="1.100" fill="#7a7a82"/><rect x="141.1" y="377.2" width="1.100" height="1.100" fill="#7a7a82"/><rect x="141.1" y="379.9" width="1.100" height="1.100" fill="#7a7a82"/><path d="M151.20000000000002 377.5l3.600 3.800" stroke="#333" stroke-width="1.700" stroke-linecap="round"/><circle cx="148.9" cy="375" r="3.300" fill="#fbfbfb" stroke="#8a8a8e" stroke-width="0.900"/><circle cx="148.9" cy="375" r="1.300" fill="#e02a2a"/><path d="M165.0 377.5l3.600 3.800" stroke="#333" stroke-width="1.700" stroke-linecap="round"/><circle cx="162.7" cy="375" r="3.300" fill="#fbfbfb" stroke="#8a8a8e" stroke-width="0.900"/><path d="M160.900 374.200h3.600v1.600h-3.600z" fill="#e06050"/><path d="M178.10000000000002 377.5l3.600 3.800" stroke="#333" stroke-width="1.700" stroke-linecap="round"/><circle cx="175.8" cy="375" r="3.300" fill="#fbfbfb" stroke="#8a8a8e" stroke-width="0.900"/><path d="M173.800 375h4M175.800 373v4M174.300 373.500h3v3h-3z" stroke="#666" stroke-width="0.600" fill="none"/><circle cx="190.200" cy="376.500" r="4.300" fill="#fafafa" stroke="#8a8a90" stroke-width="0.800"/><path d="M188 376.500h4.400" stroke="#555" stroke-width="0.900"/><path d="M195 376.300h57.500" stroke="#b5b5bb" stroke-width="0.800"/><path d="M223.200 374.800v3" stroke="#b5b5bb" stroke-width="0.700"/><path d="M196.400 372.600h3.800v4.800l-1.900 2-1.900-2z" fill="#fdfdfd" stroke="#8a8a90" stroke-width="0.700"/><circle cx="257.100" cy="376.500" r="4.300" fill="#fafafa" stroke="#8a8a90" stroke-width="0.800"/><path d="M254.900 376.500h4.400M257.100 374.300v4.400" stroke="#555" stroke-width="0.900"/><path d="M267.500 373.500h-1.500v6h1.500M272.500 373.500h1.500v6h-1.500M268 376.500h4" fill="none" stroke="#2a7ad0" stroke-width="0.900"/><path d="M278.7 378.5h3.200" stroke="#444" stroke-width="0.700"/><path d="M278.6 379.8h3.400l-1.700 2z" fill="#444"/><rect x="288.3" y="371.8" width="1.100" height="1.100" fill="#7a7a82"/><rect x="288.3" y="374.5" width="1.100" height="1.100" fill="#7a7a82"/><rect x="288.3" y="377.2" width="1.100" height="1.100" fill="#7a7a82"/><rect x="288.3" y="379.9" width="1.100" height="1.100" fill="#7a7a82"/><circle cx="297.900" cy="376.800" r="4.200" fill="#fdfdfd" stroke="#a8a8ac" stroke-width="0.800"/><path d="M297.900 374v2.800l2 1.200" stroke="#999" stroke-width="0.700" fill="none"/><path d="M311.800 373.200l6.200 3.600-6.200 3.600z" fill="#1838d8"/><path d="M349.700 376h2.800l-1.400 1.800z" fill="#333"/><path d="M357.800 373.400v6.800" stroke="#111" stroke-width="1.300"/><path d="M358.3 376.800l3.6-3.4v6.8zM361.5 376.800l3.6-3.4v6.8z" fill="#111"/><path d="M371.9 376.800l3.6-3.4v6.8zM375 376.800l3.6-3.4v6.8z" fill="#111"/><path d="M386.5 376.800l3.6-3.4v6.8z" fill="#111"/><path d="M403.8 376.800l-3.6-3.4v6.8z" fill="#111"/><path d="M415.5 376.800l-3.6-3.4v6.8zM418.6 376.800l-3.6-3.4v6.8z" fill="#111"/><path d="M429 376.800l-3.6-3.4v6.8zM432.2 376.800l-3.6-3.4v6.8z" fill="#111"/><path d="M432.800 373.400v6.800" stroke="#111" stroke-width="1.300"/><path d="M437.6 371.500v10" stroke="#d4d5dc" stroke-width="0.800"/><path d="M444.500 372.600h-2v8h2M448.500 372.600h2v8h-2" fill="none" stroke="#2a78d0" stroke-width="1.200"/><path d="M458 372.600h-2v8h2" fill="none" stroke="#d84a3a" stroke-width="1.200"/><path d="M462.500 374h2v5.200h-2M459 374h1.500M459 379.200h1.500" fill="none" stroke="#2a78d0" stroke-width="0.900"/><path d="M475 372.600h2v8h-2" fill="none" stroke="#d84a3a" stroke-width="1.200"/><path d="M471 374h-2v5.200h2M474 374h-1.500M474 379.200h-1.500" fill="none" stroke="#2a78d0" stroke-width="0.900"/><path d="M481.5 371.500v10" stroke="#d4d5dc" stroke-width="0.800"/><path d="M486.300 377l4-3.500v2q4 0 4.500 4-1.500-2-4.500-2v2z" fill="#2a78d0"/><path d="M485.300 374v5.500" stroke="#9cc0e8" stroke-width="0.700"/><path d="M506.600 377l-4-3.500v2q-4 0-4.500 4 1.500-2 4.500-2v2z" fill="#2a78d0"/><path d="M507.600 374v5.500" stroke="#9cc0e8" stroke-width="0.700"/><path d="M512.8 378.5h3.200" stroke="#444" stroke-width="0.700"/><path d="M512.6999999999999 379.8h3.400l-1.700 2z" fill="#444"/><rect x="522.0" y="371.8" width="1.100" height="1.100" fill="#7a7a82"/><rect x="522.0" y="374.5" width="1.100" height="1.100" fill="#7a7a82"/><rect x="522.0" y="377.2" width="1.100" height="1.100" fill="#7a7a82"/><rect x="522.0" y="379.9" width="1.100" height="1.100" fill="#7a7a82"/><path d="M529.500 372.500h-1.800v8.500h1.800" fill="none" stroke="#d84a3a" stroke-width="1"/><path d="M530 374.500h3M530 377h4.500M530 379.500h4.500" stroke="#6a9ad8" stroke-width="0.900"/><path d="M546.500 372.500h1.800v8.500h-1.800" fill="none" stroke="#d84a3a" stroke-width="1"/><path d="M546 374.500h-3M546 377h-4.500M546 379.500h-4.500" stroke="#6a9ad8" stroke-width="0.900"/><path d="M552.8 371.500v10" stroke="#d4d5dc" stroke-width="0.800"/><path d="M557.500 378h6" stroke="#5a92d8" stroke-width="0.900"/><rect x="563.500" y="374.800" width="2" height="2" fill="none" stroke="#7aa8e0" stroke-width="0.600"/><path d="M571.500 378h6" stroke="#d84040" stroke-width="1.200"/><path d="M577 376l2-1" stroke="#d88080" stroke-width="0.800"/><path d="M584.0 378.5h3.200" stroke="#444" stroke-width="0.700"/><path d="M583.9 379.8h3.400l-1.700 2z" fill="#444"/></svg><div class="t" style="left:321.8px;top:372.79px;font-size:6.85px;line-height:8.22px;color:#333;font-weight:normal;">Preview</div><div style="left:137px;top:398px;width:772px;height:1px;background:#8f8f93;"></div><svg style="left:136.500px;top:385.300px" width="110" height="14" viewBox="0 0 110 14"><path d="M3.500 12.700L13.500 1.800h33v10.900" fill="#fff" stroke="#aeb0b6" stroke-width="0.700"/><rect x="47.500" y="1.800" width="54.300" height="10.900" rx="1" fill="#fdfdfd" stroke="#b9bbc1" stroke-width="0.700"/></svg><div class="t" style="left:153.3px;top:389.10px;font-size:7.0px;line-height:8.40px;color:#222;font-weight:bold;">Scene 0</div><div class="t" style="left:187.5px;top:389.16px;font-size:6.9px;line-height:8.28px;color:#333;font-weight:normal;">Video: Video_2</div><div style="left:907.3px;top:399px;width:3px;height:52px;background:#ececf0;"></div><div style="left:137.0px;top:398.8px;width:770.3px;height:52.2px;background:#a3a2a3;"></div><div style="left:137.0px;top:398.8px;width:770.3px;height:1.3px;background:#7d7d80;"></div><div style="left:137.0px;top:417px;width:147.6px;height:14px;background:#b9b9bb;border-top:1px solid #c6c6c8;border-bottom:1px solid #8c8c8e;"></div><div style="left:150.6px;top:417.5px;width:0.9px;height:33.5px;background:#929294;"></div><div style="left:162.4px;top:417.5px;width:0.9px;height:33.5px;background:#929294;"></div><div style="left:199.3px;top:417.5px;width:0.9px;height:33.5px;background:#929294;"></div><div style="left:211.4px;top:417.5px;width:0.9px;height:33.5px;background:#929294;"></div><div style="left:223.9px;top:417.5px;width:0.9px;height:33.5px;background:#929294;"></div><div style="left:284.6px;top:399.3px;width:1px;height:51.7px;background:#6e6e70;"></div><div style="left:285.6px;top:400.1px;width:621.6999999999999px;height:5.2px;background:#d6d6d8;border-bottom:1.300px solid #848486;"></div><div style="left:285.6px;top:405.3px;width:621.6999999999999px;height:12.9px;background:#a2a2a4;"></div><div style="left:285.6px;top:418.2px;width:621.6999999999999px;height:13.8px;background:#7c7a7c;border-bottom:2.600px solid #454547;"></div><div style="left:903.2px;top:418.2px;width:4.1px;height:12.4px;background:#58585a;"></div><div style="left:289.6px;top:404.400px;width:617.6999999999999px;height:15.200px;overflow:hidden;"><div class="t" style="left:-19.95px;width:40px;text-align:center;top:3.200px;font-size:6.450px;line-height:8px;color:#2c2c2e;">00:00.000</div><div class="t" style="left:15.80px;width:40px;text-align:center;top:3.200px;font-size:6.450px;line-height:8px;color:#2c2c2e;">00:02.600</div><div class="t" style="left:51.55px;width:40px;text-align:center;top:3.200px;font-size:6.450px;line-height:8px;color:#2c2c2e;">00:05.200</div><div class="t" style="left:87.30px;width:40px;text-align:center;top:3.200px;font-size:6.450px;line-height:8px;color:#2c2c2e;">00:07.800</div><div class="t" style="left:123.05px;width:40px;text-align:center;top:3.200px;font-size:6.450px;line-height:8px;color:#2c2c2e;">00:10.400</div><div class="t" style="left:158.80px;width:40px;text-align:center;top:3.200px;font-size:6.450px;line-height:8px;color:#2c2c2e;">00:13.000</div><div class="t" style="left:194.55px;width:40px;text-align:center;top:3.200px;font-size:6.450px;line-height:8px;color:#2c2c2e;">00:15.600</div><div class="t" style="left:230.30px;width:40px;text-align:center;top:3.200px;font-size:6.450px;line-height:8px;color:#2c2c2e;">00:18.200</div><div class="t" style="left:266.05px;width:40px;text-align:center;top:3.200px;font-size:6.450px;line-height:8px;color:#2c2c2e;">00:20.800</div><div class="t" style="left:301.80px;width:40px;text-align:center;top:3.200px;font-size:6.450px;line-height:8px;color:#2c2c2e;">00:23.400</div><div class="t" style="left:337.55px;width:40px;text-align:center;top:3.200px;font-size:6.450px;line-height:8px;color:#2c2c2e;">00:26.000</div><div class="t" style="left:373.30px;width:40px;text-align:center;top:3.200px;font-size:6.450px;line-height:8px;color:#2c2c2e;">00:28.600</div><div class="t" style="left:409.05px;width:40px;text-align:center;top:3.200px;font-size:6.450px;line-height:8px;color:#2c2c2e;">00:31.200</div><div class="t" style="left:444.80px;width:40px;text-align:center;top:3.200px;font-size:6.450px;line-height:8px;color:#2c2c2e;">00:33.800</div><div class="t" style="left:480.55px;width:40px;text-align:center;top:3.200px;font-size:6.450px;line-height:8px;color:#2c2c2e;">00:36.400</div><div class="t" style="left:516.30px;width:40px;text-align:center;top:3.200px;font-size:6.450px;line-height:8px;color:#2c2c2e;">00:39.000</div><div class="t" style="left:552.05px;width:40px;text-align:center;top:3.200px;font-size:6.450px;line-height:8px;color:#2c2c2e;">00:41.600</div><div class="t" style="left:587.80px;width:40px;text-align:center;top:3.200px;font-size:6.450px;line-height:8px;color:#2c2c2e;">00:44.200</div></div><svg style="left:0;top:0" width="1024" height="451" viewBox="0 0 1024 451"><path d="M289.65 419.800v-5.2M295.61 419.800v-2.6M301.57 419.800v-2.6M307.52 419.800v-3.6M313.48 419.800v-2.6M319.44 419.800v-2.6M325.40 419.800v-5.2M331.36 419.800v-2.6M337.32 419.800v-2.6M343.27 419.800v-3.6M349.23 419.800v-2.6M355.19 419.800v-2.6M361.15 419.800v-5.2M367.11 419.800v-2.6M373.07 419.800v-2.6M379.02 419.800v-3.6M384.98 419.800v-2.6M390.94 419.800v-2.6M396.90 419.800v-5.2M402.86 419.800v-2.6M408.82 419.800v-2.6M414.77 419.800v-3.6M420.73 419.800v-2.6M426.69 419.800v-2.6M432.65 419.800v-5.2M438.61 419.800v-2.6M444.57 419.800v-2.6M450.52 419.800v-3.6M456.48 419.800v-2.6M462.44 419.800v-2.6M468.40 419.800v-5.2M474.36 419.800v-2.6M480.32 419.800v-2.6M486.27 419.800v-3.6M492.23 419.800v-2.6M498.19 419.800v-2.6M504.15 419.800v-5.2M510.11 419.800v-2.6M516.07 419.800v-2.6M522.02 419.800v-3.6M527.98 419.800v-2.6M533.94 419.800v-2.6M539.90 419.800v-5.2M545.86 419.800v-2.6M551.82 419.800v-2.6M557.77 419.800v-3.6M563.73 419.800v-2.6M569.69 419.800v-2.6M575.65 419.800v-5.2M581.61 419.800v-2.6M587.57 419.800v-2.6M593.52 419.800v-3.6M599.48 419.800v-2.6M605.44 419.800v-2.6M611.40 419.800v-5.2M617.36 419.800v-2.6M623.32 419.800v-2.6M629.27 419.800v-3.6M635.23 419.800v-2.6M641.19 419.800v-2.6M647.15 419.800v-5.2M653.11 419.800v-2.6M659.07 419.800v-2.6M665.03 419.800v-3.6M670.98 419.800v-2.6M676.94 419.800v-2.6M682.90 419.800v-5.2M688.86 419.800v-2.6M694.82 419.800v-2.6M700.78 419.800v-3.6M706.73 419.800v-2.6M712.69 419.800v-2.6M718.65 419.800v-5.2M724.61 419.800v-2.6M730.57 419.800v-2.6M736.53 419.800v-3.6M742.48 419.800v-2.6M748.44 419.800v-2.6M754.40 419.800v-5.2M760.36 419.800v-2.6M766.32 419.800v-2.6M772.28 419.800v-3.6M778.23 419.800v-2.6M784.19 419.800v-2.6M790.15 419.800v-5.2M796.11 419.800v-2.6M802.07 419.800v-2.6M808.03 419.800v-3.6M813.98 419.800v-2.6M819.94 419.800v-2.6M825.90 419.800v-5.2M831.86 419.800v-2.6M837.82 419.800v-2.6M843.78 419.800v-3.6M849.73 419.800v-2.6M855.69 419.800v-2.6M861.65 419.800v-5.2M867.61 419.800v-2.6M873.57 419.800v-2.6M879.53 419.800v-3.6M885.48 419.800v-2.6M891.44 419.800v-2.6M897.40 419.800v-5.2M903.36 419.800v-2.6" stroke="#38383a" stroke-width="0.750" fill="none"/><rect x="285.600" y="399.800" width="4" height="5" fill="#5a8ad8" stroke="#3a68b0" stroke-width="0.500"/><rect x="903.300" y="399.600" width="4" height="6.200" fill="#5a8ad8" stroke="#3a68b0" stroke-width="0.500"/><path d="M286.800 407.500h6v6l-3 3.600-3-3.600z" fill="#7eaaea" stroke="#4a78c0" stroke-width="0.600"/><rect x="285.800" y="419.600" width="3" height="10.600" fill="#5a8ad8" stroke="#3a68b0" stroke-width="0.400"/><rect x="290" y="419.600" width="3.300" height="10.600" fill="#6a98e0" stroke="#3a68b0" stroke-width="0.400"/><path d="M140.500 424.300q4-4 8 0-4 4-8 0z" fill="none" stroke="#e4e4e6" stroke-width="0.800"/><circle cx="144.500" cy="424.300" r="1.200" fill="#e4e4e6"/><rect x="153.600" y="423.800" width="5" height="4" fill="#e4e4e6" opacity="0.85"/><path d="M154.600 423.800v-1.500a1.500 1.500 0 0 1 3 0v1.500" fill="none" stroke="#e4e4e6" stroke-width="0.800"/><rect x="165" y="420.500" width="4.500" height="4.500" fill="#e4e4e6"/><circle cx="171" cy="426.300" r="2.400" fill="#e4e4e6"/><path d="M201.500 424.300h1M202.800 422.800v3M204 421v6.600M205.300 422v4.600M206.600 420.500v7.600M207.900 423v2.600M209 424.300h.8" stroke="#e4e4e6" stroke-width="0.900"/><rect x="215.800" y="421.500" width="2.600" height="6" fill="#e4e4e6" opacity="0.8"/><path d="M217 420v1" stroke="#e4e4e6"/><path d="M140.300 443q4.200-3.800 8.400 0-4.200 3.800-8.400 0z" fill="none" stroke="#3a3a3c" stroke-width="0.900"/><circle cx="144.500" cy="443" r="1.500" fill="#3a3a3c"/><path d="M193.300 442l2 2 2-2" fill="none" stroke="#5a5a5c" stroke-width="0.800"/><path d="M201.500 443h1M202.800 441.500v3M204 439.800v6.400M205.300 441v4M206.600 439.300v7.400M207.900 441.800v2.400M209 443h.8" stroke="#3a3a3c" stroke-width="0.900"/><rect x="213.600" y="439.800" width="2.800" height="6.600" fill="#eee" stroke="#bbb" stroke-width="0.400"/><path d="M218.300 441.600h3.800l-1.900 2.400z" fill="#2a6ad0"/><rect x="225.300" y="438" width="8.800" height="10" fill="#e8e8ea" stroke="#707074" stroke-width="0.700"/><rect x="227" y="439.300" width="5.400" height="3" fill="#4a9ab0"/><rect x="227" y="443.600" width="5.400" height="3" fill="#4a9ab0"/><path d="M226 438.500v9M233.300 438.500v9" stroke="#555" stroke-width="0.600" stroke-dasharray="0.900 0.900"/></svg><div class="t" style="left:177px;top:420.80px;font-size:7.0px;line-height:8.40px;color:#2e2e30;">Com...</div><div class="t" style="left:226px;top:420.80px;font-size:7.0px;line-height:8.40px;color:#2e2e30;">Layers</div><div class="t" style="left:164.6px;top:439.30px;font-size:7.0px;line-height:8.40px;color:#2a2a2c;">Blend</div><div class="t" style="left:237.8px;top:439.30px;font-size:7.0px;line-height:8.40px;color:#2a2a2c;">Video</div><div style="left:290.4px;top:432.2px;width:555.5px;height:18.8px;background:linear-gradient(#bccff0 0%,#a2bbe9 28%,#82a4e2 52%,#5a88d9 78%,#4678d3 100%);border-left:1px solid #d88;"></div><svg style="left:291px;top:432.300px" width="25.300" height="18.700" viewBox="0 0 25.300 18.700"><defs><linearGradient id="tw" x1="0" x2="1" y1="0" y2="0"><stop offset="0" stop-color="#8a6a48"/><stop offset="0.2" stop-color="#c4a070"/><stop offset="0.5" stop-color="#d8c096"/><stop offset="0.75" stop-color="#b08c64"/><stop offset="1" stop-color="#86664a"/></linearGradient></defs><rect width="25.300" height="18.700" fill="url(#tw)"/><path d="M0 3.500h25.300M0 7h25.300M0 10.500h25.300M0 14h25.300" stroke="#8a6a48" stroke-width="0.400" opacity="0.500"/><ellipse cx="12" cy="6" rx="3.500" ry="4" fill="#e4d4b4" opacity="0.700"/><rect y="16.900" width="25.300" height="1.800" fill="#2a2420"/><path d="M17.300 4.300q1.200-.8 2 0l.4 2.500 1.600 1.800-1 1 .3 3 .8 5.800h-1.800l-1.300-4.500-1.500 4.500h-2l1.600-6-.3-2.800-1.500.8-.5-1 2-2z" fill="#16120f"/><path d="M17 7.600h2.600l.2 3.200h-3z" fill="#a4a6ac"/></svg><div class="t" style="left:320px;top:438.50px;font-size:7.0px;line-height:8.40px;color:#2c4670;">Video_1</div></body></html>
